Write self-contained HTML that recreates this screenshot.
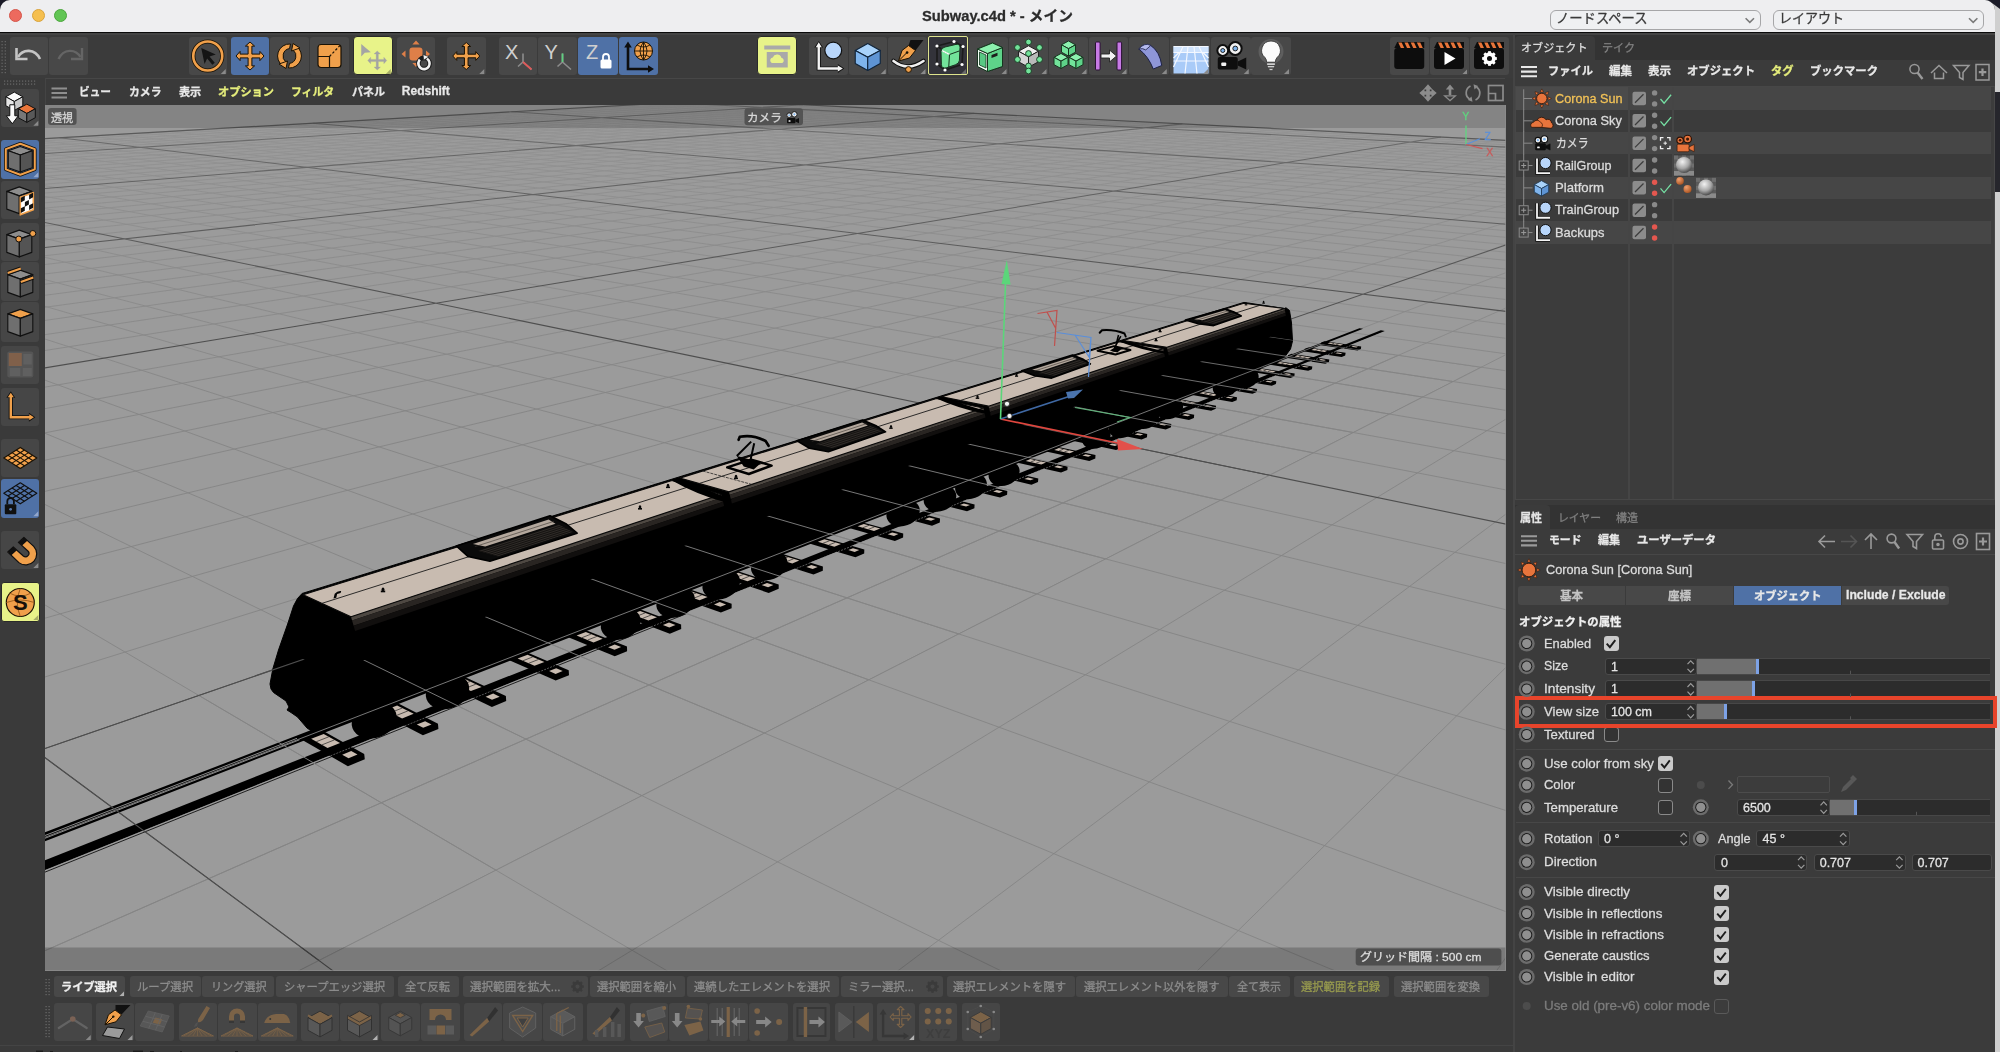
<!DOCTYPE html>
<html lang="ja"><head><meta charset="utf-8"><title>Subway.c4d * - メイン</title><style>html,body{margin:0;padding:0;width:2000px;height:1052px;overflow:hidden;background:#3a3a3a}body{position:relative;font-family:"Liberation Sans","Noto Sans CJK JP",sans-serif}div{position:absolute;box-sizing:border-box}.t{position:absolute;white-space:pre;transform-origin:0 50%;display:block;-webkit-text-stroke:0.28px currentColor}svg{position:absolute;left:0;top:0}</style></head><body>
<div style="left:0px;top:0px;width:2000px;height:1052px;background:#1b1b28;"></div>
<div style="left:1990px;top:0px;width:10px;height:1052px;background:#cfcfcf;"></div>
<div style="left:1995px;top:92px;width:5px;height:100px;background:#26262c;"></div>
<div style="left:0px;top:0px;width:1995px;height:1052px;background:#3a3a3a;border-radius:10px 10px 0 0;"></div>
<div style="left:0px;top:0px;width:1995px;height:31.5px;background:#eeeef0;border-radius:10px 10px 0 0;"></div>
<div style="left:0px;top:31.5px;width:1995px;height:1.5px;background:#0a0a0a;"></div>
<div style="left:9px;top:9px;width:13px;height:13px;background:#ed6a5e;border-radius:50%;border:0.5px solid #d5554a;"></div>
<div style="left:31.5px;top:9px;width:13px;height:13px;background:#f5bf4f;border-radius:50%;border:0.5px solid #d9a33c;"></div>
<div style="left:53.7px;top:9px;width:13px;height:13px;background:#61c554;border-radius:50%;border:0.5px solid #4aa63c;"></div>
<div style="left:1549.5px;top:9.8px;width:211.3px;height:20px;background:#eff0f2;border-radius:6px;border:1px solid #a6a6a8;"></div>
<div style="left:1772.5px;top:9.8px;width:211.7px;height:20px;background:#eff0f2;border-radius:6px;border:1px solid #a6a6a8;"></div>
<div style="left:0px;top:33px;width:1995px;height:45px;background:#3b3b3b;"></div>
<div style="left:0px;top:33px;width:1995px;height:2px;background:#444;"></div>
<div style="left:10px;top:37px;width:38px;height:38px;background:#484848;border-radius:3px;"></div>
<div style="left:49px;top:37px;width:39px;height:38px;background:#484848;border-radius:3px;"></div>
<div style="left:188.5px;top:37px;width:38.5px;height:38px;background:#484848;border-radius:3px;"></div>
<div style="left:231px;top:37px;width:38px;height:38px;background:#4f71a6;border-radius:3px;"></div>
<div style="left:270px;top:37px;width:39px;height:38px;background:#484848;border-radius:3px;"></div>
<div style="left:310px;top:37px;width:39px;height:38px;background:#484848;border-radius:3px;"></div>
<div style="left:353px;top:35.8px;width:39.5px;height:39.4px;background:#e8f389;border-radius:4px;border:1px solid #2a2a2a;"></div>
<div style="left:397px;top:37px;width:38px;height:38px;background:#484848;border-radius:3px;"></div>
<div style="left:447px;top:37px;width:38.5px;height:38px;background:#484848;border-radius:3px;"></div>
<div style="left:499px;top:37px;width:38px;height:38px;background:#484848;border-radius:3px;"></div>
<div style="left:538px;top:37px;width:39px;height:38px;background:#484848;border-radius:3px;"></div>
<div style="left:578px;top:37px;width:40px;height:38px;background:#4f71a6;border-radius:3px;"></div>
<div style="left:618.5px;top:37px;width:39px;height:38px;background:#4f71a6;border-radius:3px;"></div>
<div style="left:757px;top:35.8px;width:39.5px;height:39.4px;background:#e8f389;border-radius:4px;border:1px solid #2a2a2a;"></div>
<div style="left:809px;top:37px;width:38.5px;height:38px;background:#484848;border-radius:3px;"></div>
<div style="left:848.5px;top:37px;width:38.5px;height:38px;background:#484848;border-radius:3px;"></div>
<div style="left:888px;top:37px;width:39px;height:38px;background:#484848;border-radius:3px;"></div>
<div style="left:928px;top:36.2px;width:40px;height:39.3px;background:#33333a;border-radius:2px;border:1.2px solid #dde38d;"></div>
<div style="left:969px;top:37px;width:39px;height:38px;background:#484848;border-radius:3px;"></div>
<div style="left:1009px;top:37px;width:39px;height:38px;background:#484848;border-radius:3px;"></div>
<div style="left:1049px;top:37px;width:39px;height:38px;background:#484848;border-radius:3px;"></div>
<div style="left:1089px;top:37px;width:39px;height:38px;background:#484848;border-radius:3px;"></div>
<div style="left:1129px;top:37px;width:39.5px;height:38px;background:#484848;border-radius:3px;"></div>
<div style="left:1170px;top:37px;width:40px;height:38px;background:#484848;border-radius:3px;"></div>
<div style="left:1211px;top:37px;width:39.5px;height:38px;background:#484848;border-radius:3px;"></div>
<div style="left:1251px;top:37px;width:40px;height:38px;background:#484848;border-radius:3px;"></div>
<div style="left:1390px;top:37px;width:38.5px;height:38px;background:#484848;border-radius:3px;"></div>
<div style="left:1429.5px;top:37px;width:39px;height:38px;background:#484848;border-radius:3px;"></div>
<div style="left:1469.5px;top:37px;width:39px;height:38px;background:#484848;border-radius:3px;"></div>
<div style="left:0px;top:78px;width:45px;height:974px;background:#3a3a3a;"></div>
<div style="left:1.3px;top:89px;width:38px;height:37.5px;background:#464646;border-radius:3px;"></div>
<div style="left:1.3px;top:140px;width:38px;height:38.5px;background:#4f71a6;border-radius:3px;"></div>
<div style="left:1.3px;top:180.5px;width:38px;height:38.5px;background:#464646;border-radius:3px;"></div>
<div style="left:1.3px;top:223px;width:38px;height:38px;background:#464646;border-radius:3px;"></div>
<div style="left:1.3px;top:262px;width:38px;height:39px;background:#464646;border-radius:3px;"></div>
<div style="left:1.3px;top:302px;width:38px;height:39.5px;background:#464646;border-radius:3px;"></div>
<div style="left:1.3px;top:345.5px;width:38px;height:38px;background:#464646;border-radius:3px;"></div>
<div style="left:1.3px;top:387.5px;width:38px;height:38.5px;background:#464646;border-radius:3px;"></div>
<div style="left:1.3px;top:439.4px;width:38px;height:38px;background:#464646;border-radius:3px;"></div>
<div style="left:1.3px;top:478.6px;width:38px;height:39.4px;background:#4f71a6;border-radius:3px;"></div>
<div style="left:1.3px;top:531px;width:38px;height:38px;background:#464646;border-radius:3px;"></div>
<div style="left:1px;top:582.4px;width:38.5px;height:39.2px;background:#e8f389;border-radius:3px;border:1px solid #2a2a2a;"></div>
<div style="left:45px;top:78px;width:1461px;height:27px;background:#3a3a3a;border-radius:0;border-top:1px solid #474747;border-left:1px solid #444;"></div>
<div style="left:1505px;top:78px;width:9px;height:974px;background:#3a3a3a;"></div>
<div style="left:45px;top:970px;width:1460px;height:82px;background:#3a3a3a;"></div>
<div style="left:53.8px;top:976px;width:71.2px;height:21.2px;background:#484848;border-radius:3px;"></div>
<div style="left:129.5px;top:976px;width:71px;height:21.2px;background:#484848;border-radius:3px;"></div>
<div style="left:201.5px;top:976px;width:72.5px;height:21.2px;background:#484848;border-radius:3px;"></div>
<div style="left:275.5px;top:976px;width:118.5px;height:21.2px;background:#484848;border-radius:3px;"></div>
<div style="left:398px;top:976px;width:60.5px;height:21.2px;background:#484848;border-radius:3px;"></div>
<div style="left:463px;top:976px;width:124.5px;height:21.2px;background:#484848;border-radius:3px;"></div>
<div style="left:590px;top:976px;width:95px;height:21.2px;background:#484848;border-radius:3px;"></div>
<div style="left:687px;top:976px;width:152px;height:21.2px;background:#484848;border-radius:3px;"></div>
<div style="left:841px;top:976px;width:101.5px;height:21.2px;background:#484848;border-radius:3px;"></div>
<div style="left:946.5px;top:976px;width:128px;height:21.2px;background:#484848;border-radius:3px;"></div>
<div style="left:1075.8px;top:976px;width:151.9px;height:21.2px;background:#484848;border-radius:3px;"></div>
<div style="left:1229px;top:976px;width:61px;height:21.2px;background:#484848;border-radius:3px;"></div>
<div style="left:1294.3px;top:976px;width:94.7px;height:21.2px;background:#484848;border-radius:3px;"></div>
<div style="left:1393.8px;top:976px;width:95.2px;height:21.2px;background:#484848;border-radius:3px;"></div>
<div style="left:54px;top:1003px;width:37.5px;height:37.6px;background:#464646;border-radius:3px;"></div>
<div style="left:95.5px;top:1003px;width:38px;height:37.6px;background:#464646;border-radius:3px;"></div>
<div style="left:134.5px;top:1003px;width:39.5px;height:37.6px;background:#464646;border-radius:3px;"></div>
<div style="left:178.5px;top:1003px;width:38px;height:37.6px;background:#464646;border-radius:3px;"></div>
<div style="left:217.5px;top:1003px;width:39px;height:37.6px;background:#464646;border-radius:3px;"></div>
<div style="left:257.5px;top:1003px;width:39.5px;height:37.6px;background:#464646;border-radius:3px;"></div>
<div style="left:301px;top:1003px;width:38px;height:37.6px;background:#464646;border-radius:3px;"></div>
<div style="left:340px;top:1003px;width:39px;height:37.6px;background:#464646;border-radius:3px;"></div>
<div style="left:380.5px;top:1003px;width:39.5px;height:37.6px;background:#464646;border-radius:3px;"></div>
<div style="left:421px;top:1003px;width:39px;height:37.6px;background:#464646;border-radius:3px;"></div>
<div style="left:464.2px;top:1003px;width:37.8px;height:37.6px;background:#464646;border-radius:3px;"></div>
<div style="left:503.3px;top:1003px;width:38.7px;height:37.6px;background:#464646;border-radius:3px;"></div>
<div style="left:543px;top:1003px;width:39.5px;height:37.6px;background:#464646;border-radius:3px;"></div>
<div style="left:586.8px;top:1003px;width:38.2px;height:37.6px;background:#464646;border-radius:3px;"></div>
<div style="left:629.5px;top:1003px;width:38.5px;height:37.6px;background:#464646;border-radius:3px;"></div>
<div style="left:668.8px;top:1003px;width:39.2px;height:37.6px;background:#464646;border-radius:3px;"></div>
<div style="left:708.7px;top:1003px;width:39.1px;height:37.6px;background:#464646;border-radius:3px;"></div>
<div style="left:748.6px;top:1003px;width:39.1px;height:37.6px;background:#464646;border-radius:3px;"></div>
<div style="left:792.5px;top:1003px;width:37.9px;height:37.6px;background:#464646;border-radius:3px;"></div>
<div style="left:834.7px;top:1003px;width:38.3px;height:37.6px;background:#464646;border-radius:3px;"></div>
<div style="left:876.9px;top:1003px;width:38.4px;height:37.6px;background:#464646;border-radius:3px;"></div>
<div style="left:919.3px;top:1003px;width:37.9px;height:37.6px;background:#464646;border-radius:3px;"></div>
<div style="left:961.5px;top:1003px;width:38.5px;height:37.6px;background:#464646;border-radius:3px;"></div>
<div style="left:0px;top:1044.5px;width:1513px;height:1px;background:#444;"></div>
<div style="left:1513.3px;top:33px;width:1.4px;height:1019px;background:#444;"></div>
<div style="left:1514.5px;top:35px;width:480.5px;height:50px;background:#333;"></div>
<div style="left:1514.5px;top:36px;width:80px;height:24px;background:#3b3b3b;border-radius:4px 4px 0 0;"></div>
<div style="left:1514.5px;top:59.5px;width:480.5px;height:26px;background:#3b3b3b;"></div>
<div style="left:1514.5px;top:85.5px;width:480.5px;height:414px;background:#3c3c3c;border-radius:0;border:1px solid #474747;"></div>
<div style="left:1516px;top:87.3px;width:475px;height:22.35px;background:#464646;"></div>
<div style="left:1516px;top:87.3px;width:112px;height:22.35px;background:#4b4b4b;"></div>
<div style="left:1516px;top:109.65px;width:475px;height:22.35px;background:#3b3b3b;"></div>
<div style="left:1516px;top:132px;width:475px;height:22.35px;background:#464646;"></div>
<div style="left:1516px;top:154.35px;width:475px;height:22.35px;background:#3b3b3b;"></div>
<div style="left:1516px;top:176.7px;width:475px;height:22.35px;background:#464646;"></div>
<div style="left:1516px;top:199.05px;width:475px;height:22.35px;background:#3b3b3b;"></div>
<div style="left:1516px;top:221.4px;width:475px;height:22.35px;background:#464646;"></div>
<div style="left:1628px;top:86.5px;width:1.8px;height:412px;background:#454545;"></div>
<div style="left:1672.4px;top:86.5px;width:1.8px;height:412px;background:#454545;"></div>
<div style="left:1514.5px;top:504.5px;width:480.5px;height:24px;background:#333;"></div>
<div style="left:1514.5px;top:505px;width:35.5px;height:24px;background:#3b3b3b;border-radius:4px 4px 0 0;"></div>
<div style="left:1514.5px;top:528.5px;width:480.5px;height:524px;background:#3b3b3b;"></div>
<div style="left:1514.5px;top:553.5px;width:480.5px;height:1px;background:#474747;"></div>
<div style="left:1518px;top:586px;width:107px;height:19px;background:#484848;border-radius:3px 0 0 3px;"></div>
<div style="left:1626px;top:586px;width:107px;height:19px;background:#484848;"></div>
<div style="left:1734px;top:586px;width:107px;height:19px;background:#4f71a6;"></div>
<div style="left:1842px;top:586px;width:107px;height:19px;background:#484848;border-radius:0 3px 3px 0;"></div>
<div style="left:1603.5px;top:636px;width:15px;height:15px;background:#cacaca;border-radius:3px;"></div>
<div style="left:1605px;top:657.5px;width:92px;height:17.4px;background:#2c2c2c;border-radius:3px;border:1px solid #4a4a4a;"></div>
<div style="left:1697px;top:657.5px;width:293px;height:17.4px;background:#2c2c2c;border-top:1px solid #474747;border-bottom:1px solid #474747;"></div>
<div style="left:1697px;top:658.5px;width:59.5px;height:15.4px;background:#707070;"></div>
<div style="left:1756px;top:658.5px;width:3px;height:15.4px;background:#7da2e6;"></div>
<div style="left:1605px;top:680.3px;width:92px;height:17.4px;background:#2c2c2c;border-radius:3px;border:1px solid #4a4a4a;"></div>
<div style="left:1697px;top:680.3px;width:293px;height:17.4px;background:#2c2c2c;border-top:1px solid #474747;border-bottom:1px solid #474747;"></div>
<div style="left:1697px;top:681.3px;width:55px;height:15.4px;background:#707070;"></div>
<div style="left:1751.5px;top:681.3px;width:3px;height:15.4px;background:#7da2e6;"></div>
<div style="left:1605px;top:703.1px;width:92px;height:17.4px;background:#2c2c2c;border-radius:3px;border:1px solid #4a4a4a;"></div>
<div style="left:1697px;top:703.1px;width:293px;height:17.4px;background:#2c2c2c;border-top:1px solid #474747;border-bottom:1px solid #474747;"></div>
<div style="left:1697px;top:704.1px;width:27px;height:15.4px;background:#707070;"></div>
<div style="left:1723.5px;top:704.1px;width:3px;height:15.4px;background:#7da2e6;"></div>
<div style="left:1603.5px;top:727px;width:15px;height:15px;background:#333;border-radius:3px;border:1.2px solid #8a8a8a;"></div>
<div style="left:1516px;top:749.3px;width:479px;height:1px;background:#474747;"></div>
<div style="left:1658px;top:756.2px;width:15px;height:15px;background:#cacaca;border-radius:3px;"></div>
<div style="left:1658px;top:777.5px;width:15px;height:15px;background:#333;border-radius:3px;border:1.2px solid #8a8a8a;"></div>
<div style="left:1737px;top:776px;width:93px;height:17px;background:#3c3c3c;border-radius:2px;border:1px solid #4c4c4c;"></div>
<div style="left:1658px;top:799.8px;width:15px;height:15px;background:#333;border-radius:3px;border:1.2px solid #8a8a8a;"></div>
<div style="left:1737px;top:798.6px;width:93px;height:17.4px;background:#2c2c2c;border-radius:3px;border:1px solid #4a4a4a;"></div>
<div style="left:1830px;top:798.6px;width:160px;height:17.4px;background:#2c2c2c;border-top:1px solid #474747;border-bottom:1px solid #474747;"></div>
<div style="left:1830px;top:799.6px;width:24px;height:15.4px;background:#707070;"></div>
<div style="left:1853.5px;top:799.6px;width:3px;height:15.4px;background:#7da2e6;"></div>
<div style="left:1516px;top:822.3px;width:479px;height:1px;background:#474747;"></div>
<div style="left:1598px;top:830px;width:92px;height:17.4px;background:#2c2c2c;border-radius:3px;border:1px solid #4a4a4a;"></div>
<div style="left:1756px;top:830px;width:93.5px;height:17.4px;background:#2c2c2c;border-radius:3px;border:1px solid #4a4a4a;"></div>
<div style="left:1714.4px;top:853.5px;width:93.1px;height:17.4px;background:#2c2c2c;border-radius:3px;border:1px solid #4a4a4a;"></div>
<div style="left:1813.7px;top:853.5px;width:92px;height:17.4px;background:#2c2c2c;border-radius:3px;border:1px solid #4a4a4a;"></div>
<div style="left:1911.6px;top:853.5px;width:80.4px;height:17.4px;background:#2c2c2c;border-radius:3px;border:1px solid #4a4a4a;"></div>
<div style="left:1516px;top:877px;width:479px;height:1px;background:#474747;"></div>
<div style="left:1714px;top:884.6px;width:15px;height:15px;background:#cacaca;border-radius:3px;"></div>
<div style="left:1714px;top:906px;width:15px;height:15px;background:#cacaca;border-radius:3px;"></div>
<div style="left:1714px;top:927.3px;width:15px;height:15px;background:#cacaca;border-radius:3px;"></div>
<div style="left:1714px;top:948.4px;width:15px;height:15px;background:#cacaca;border-radius:3px;"></div>
<div style="left:1714px;top:969.5px;width:15px;height:15px;background:#cacaca;border-radius:3px;"></div>
<div style="left:1714px;top:998.5px;width:15px;height:15px;background:#3c3c3c;border-radius:3px;border:1.2px solid #5a5a5a;"></div>
<div style="left:1515px;top:695.5px;width:481.5px;height:32.2px;background:transparent;border:4.500px solid #e8442b;"></div>
<svg id="vp" width="1461" height="866" viewBox="45 105 1461 866" style="position:absolute;left:45px;top:105px;overflow:hidden"><rect x="45" y="105" width="1461" height="866" fill="#9b9b9b"/><defs><linearGradient id="gg" gradientUnits="userSpaceOnUse" x1="0" y1="105" x2="0" y2="420"><stop offset="0" stop-color="#fff" stop-opacity="0.32"/><stop offset="0.25" stop-color="#fff" stop-opacity="0.52"/><stop offset="1" stop-color="#fff" stop-opacity="1"/></linearGradient><linearGradient id="gG" gradientUnits="userSpaceOnUse" x1="0" y1="105" x2="0" y2="330"><stop offset="0" stop-color="#fff" stop-opacity="0.55"/><stop offset="1" stop-color="#fff" stop-opacity="1"/></linearGradient><mask id="gM" maskUnits="userSpaceOnUse" x="0" y="0" width="2000" height="1052"><rect x="0" y="0" width="2000" height="1052" fill="url(#gG)"/></mask><mask id="gm" maskUnits="userSpaceOnUse" x="0" y="0" width="2000" height="1052"><rect x="0" y="0" width="2000" height="1052" fill="url(#gg)"/></mask></defs>
<g mask="url(#gm)"><path d="M152020.3 7814.0L112689.2 5767.5 M141511.2 7508.0L52014.6 2696.6 M142439.9 7685.4L40853.5 2131.7 M143413.8 7871.4L33577.1 1763.5 M144436.5 8066.6L28458.0 1504.4 M133163.8 7560.8L24660.5 1312.2 M133899.4 7740.8L21731.5 1163.9 M134671.3 7929.6L19403.5 1046.1 M135482.0 8128.0L17508.8 950.2 M124689.5 7614.5L15936.7 870.7 M125789.3 7988.9L13478.7 746.3 M115769.8 7492.1L12499.8 696.7 M116085.6 7668.9L11645.2 653.5 M116416.9 7854.4L10892.6 615.4 M116764.7 8049.0L10224.9 581.6 M107235.2 7544.8L9628.4 551.4 M107349.0 7724.2L9092.3 524.3 M107468.4 7912.5L8607.9 499.7 M107593.8 8110.2L8168.0 477.5 M98476.6 7780.4L7399.5 438.6 M98377.4 7971.5L7061.8 421.5 M90069.6 7476.2L6750.3 405.7 M89774.6 7652.5L6462.1 391.1 M89465.2 7837.4L6194.7 377.6 M89140.4 8031.5L5946.0 365.0 M81348.5 7528.7L5713.9 353.3 M80842.4 7707.6L5496.9 342.3 M80311.5 7895.3L5293.6 332.0 M72495.2 7582.0L4923.2 313.2 M71771.6 7763.6L4753.9 304.7 M71012.2 7954.2L4594.1 296.6 M64410.5 7460.3L4443.1 288.9 M63506.6 7636.1L4300.0 281.7 M62558.7 7820.4L4164.3 274.8 M61563.6 8014.0L4035.5 268.3 M55503.5 7512.7L3912.9 262.1 M54379.5 7691.1L3796.3 256.2 M51962.3 8074.7L3579.0 245.2 M46461.5 7565.8L3477.6 240.1 M45110.9 7746.9L3380.6 235.2 M43693.5 7936.8L3287.9 230.5 M38792.3 7444.5L3198.9 226.0 M37281.5 7619.7L3113.7 221.7 M35697.3 7803.5L3031.9 217.5 M34034.2 7996.5L2953.2 213.5 M29700.0 7496.7L2877.7 209.7 M26135.3 7861.1L2735.0 202.5 M24218.7 8057.0L2667.5 199.1 M20470.0 7549.6L2602.5 195.8 M18494.5 7730.1L2539.8 192.6 M16421.4 7919.6L2479.2 189.6 M13215.0 7428.7L2420.7 186.6 M11099.3 7603.4L2364.2 183.7 M8880.8 7786.6L2309.5 181.0 M6551.9 7979.0L2256.6 178.3 M1584.5 7658.0L2155.8 173.2 M-884.3 7844.0L2107.7 170.8 M-3476.9 8039.4L2061.1 168.4 M-5479.3 7533.5L2015.9 166.1 M-8077.8 7713.5L1972.0 163.9 M-10804.4 7902.3L1929.4 161.7 M-12321.4 7412.9L1888.0 159.6 M-15040.2 7587.1L1847.8 157.6 M-17890.9 7769.8L1808.7 155.6 M-21782.5 7464.7L1733.7 151.8 M-24748.0 7641.5L1697.7 150.0 M-27858.4 7827.0L1662.6 148.2 M-31124.7 8021.7L1628.5 146.5 M-31386.7 7517.4L1595.2 144.8 M-34606.0 7696.8L1562.8 143.2 M-37984.0 7885.1L1531.2 141.6 M-37817.2 7397.1L1500.4 140.0 M-41137.1 7570.8L1470.3 138.5 M-48271.4 7944.1L1412.4 135.6 M-47461.8 7448.8L1384.4 134.1 M-51037.1 7625.1L1357.1 132.8 M-54787.0 7810.0L1330.4 131.4 M-58724.7 8004.1L1304.3 130.1 M-57252.1 7501.3L1278.9 128.8 M-61090.3 7680.2L1253.9 127.5 M-65117.4 7867.9L1229.6 126.3 M-63272.4 7381.4L1205.7 125.1 M-71300.1 7736.1L1159.6 122.8 M-75612.8 7926.7L1137.3 121.6 M-73099.9 7432.9L1115.4 120.5 M-77283.1 7608.7L1094.0 119.4 M-81670.4 7793.0L1073.0 118.4 M-86277.2 7986.5L1052.4 117.3 M-83075.8 7485.2L1032.3 116.3 M-87530.7 7663.6L1012.5 115.3 M-92204.8 7850.7L993.2 114.3 M-93203.3 7538.3L955.6 112.4 M-97937.9 7719.4L937.3 111.5 M-102907.4 7909.4L919.4 110.6 M-98697.0 7417.0L901.8 109.7 M-103486.0 7592.3L884.6 108.8 M-108508.5 7776.0L867.6 108.0 M-113782.2 7969.0L851.0 107.1 M-108857.7 7469.2L834.7 106.3 M-113927.4 7647.0L818.6 105.5 M-124833.3 8029.6L787.4 103.9 M-119172.8 7522.1L772.2 103.2 M-124531.4 7702.6L757.3 102.4 M-130155.4 7892.1L742.6 101.7 M-124253.0 7401.2L728.2 100.9 M-129645.9 7575.9L714.0 100.2 M-133549.6 7829.7L-114685.7 6718.0 M-124370.1 7444.0L-64377.4 3833.0 M-126502.1 7909.3L-33589.1 2067.4 M-117589.4 7516.0L-26871.3 1682.1 M-118426.1 7746.0L-22278.6 1418.7 M-119315.5 7990.5L-18940.2 1227.3 M-110681.5 7589.4L-16404.0 1081.9 M-111313.4 7823.9L-14411.9 967.6 M-103248.4 7439.2L-12805.8 875.5 M-103642.9 7664.2L-11483.3 799.7 M-104062.0 7903.3L-10375.6 736.2 M-96469.9 7740.5L-8624.0 635.7 M-96667.7 7984.3L-7919.7 595.3 M-89188.8 7584.3L-7301.7 559.9 M-89158.5 7818.1L-6755.1 528.5 M-82200.0 7434.4L-6268.1 500.6 M-81959.8 7658.9L-5831.5 475.6 M-81704.7 7897.3L-5437.9 453.0 M-75052.8 7506.1L-5081.2 432.5 M-74592.9 7734.9L-4756.5 413.9 M-67772.1 7579.1L-4187.1 381.3 M-67084.2 7812.4L-3936.2 366.9 M-61224.5 7429.6L-3704.3 353.6 M-60354.0 7653.6L-3489.4 341.3 M-59429.6 7891.4L-3289.6 329.8 M-53896.0 7501.1L-3103.5 319.1 M-52794.8 7729.4L-2929.7 309.2 M-51624.6 7972.0L-2767.0 299.8 M-46430.9 7574.0L-2614.3 291.1 M-43664.9 8054.1L-2335.6 275.1 M-38825.2 7648.3L-2208.1 267.8 M-37236.3 7885.5L-2087.7 260.9 M-32813.1 7496.2L-1973.7 254.3 M-31075.0 7723.9L-1865.6 248.1 M-29228.3 7965.9L-1763.0 242.3 M-25164.9 7568.9L-1665.5 236.7 M-23176.2 7801.0L-1572.8 231.3 M-21061.9 8047.8L-1484.4 226.3 M-15124.3 7879.6L-1319.6 216.8 M-11803.6 7491.3L-1242.7 212.4 M-9433.2 7718.4L-1169.0 208.2 M-6915.0 7959.8L-1098.5 204.1 M-3973.7 7563.8L-1030.9 200.3 M-1341.5 7795.4L-966.1 196.6 M1456.5 8041.5L-903.8 193.0 M4003.2 7637.7L-844.0 189.6 M6906.7 7873.8L-786.4 186.3 M12131.0 7713.0L-677.6 180.0 M15316.0 7953.7L-626.2 177.1 M17143.2 7558.7L-576.6 174.2 M20414.3 7789.7L-528.7 171.5 M23891.0 8035.2L-482.5 168.8 M25303.6 7632.4L-437.8 166.3 M28857.3 7867.9L-394.6 163.8 M29996.5 7481.5L-352.8 161.4 M33618.2 7707.5L-312.4 159.1 M38186.0 7553.7L-235.3 154.6 M42091.4 7784.1L-198.5 152.5 M46242.0 8028.9L-162.8 150.5 M46528.6 7627.2L-128.2 148.5 M50727.9 7862.1L-94.6 146.6 M50787.9 7476.6L-62.0 144.7 M55028.6 7702.1L-30.3 142.9 M59532.4 7941.6L0.6 141.1 M59155.3 7548.6L30.5 139.4 M68509.8 8022.7L88.0 136.1 M67678.7 7622.0L115.6 134.5 M72518.9 7856.3L142.5 133.0 M77665.3 8105.4L168.7 131.5 M76362.7 7696.7L194.2 130.0 M81518.8 7935.6L219.1 128.6 M80051.3 7543.6L243.4 127.2 M85211.8 7772.9L267.0 125.8 M90695.0 8016.5L290.1 124.5 M94230.8 7850.5L334.7 122.0 M100053.0 8099.0L356.2 120.7 M97621.0 7691.4L377.1 119.5 M103424.5 7929.6L397.6 118.3 M100874.5 7538.6L417.7 117.2 M106655.9 7767.3L437.3 116.1 M112798.1 8010.3L456.4 115.0 M109755.8 7611.6L475.2 113.9 M115863.9 7844.7L493.5 112.9 M118803.7 7686.0L529.0 110.8 M125250.0 7923.7L546.2 109.8 M121625.2 7533.6L563.0 108.9 M128023.1 7761.8L579.5 107.9 M134819.5 8004.1L595.7 107.0 M130683.4 7606.5L611.5 106.1 M137418.7 7839.0L627.0 105.2 M144577.7 8086.2L642.2 104.3 M139911.4 7680.7L657.1 103.5 M142303.8 7528.7L686.1 101.8 M149313.8 7756.2L700.2 101.0 M156759.6 7998.0L714.0 100.2" stroke="#858585" stroke-width="0.9" fill="none"/></g>
<g mask="url(#gM)"><path d="M153248.1 8006.3L71304.4 3672.9 M125226.1 7797.1L14611.3 803.6 M98571.2 7598.2L7766.9 457.2 M79753.9 8092.4L5102.7 322.3 M53200.5 7878.2L3685.1 250.6 M27960.2 7674.5L2805.0 206.0 M3938.0 7480.7L2205.4 175.7 M-20883.3 7961.5L1770.7 153.7 M-44617.8 7752.9L1441.0 137.0 M-67191.4 7554.6L1182.4 123.9 M-88687.1 7365.6L974.2 113.4 M-119246.4 7833.6L802.9 104.7 M-125403.9 7669.6L-44350.3 2684.5 M-96283.8 7511.1L-9434.1 682.2 M-74104.2 7978.1L-4459.6 396.9 M-45090.3 7806.7L-2470.8 282.8 M-17373.0 7643.0L-1400.1 221.4 M9132.8 7486.4L-731.0 183.1 M37465.0 7947.6L-273.2 156.8 M63690.5 7778.5L59.7 137.7 M88754.3 7616.8L312.7 123.2 M122357.0 8092.6L511.4 111.8 M146995.8 7917.7L671.7 102.6" stroke="#4e4e4e" stroke-width="1.1" fill="none"/></g>
<path d="M-129645.9 7575.9L714.0 100.2 M156759.6 7998.0L714.0 100.2" stroke="#5a5a5a" stroke-width="1.2" fill="none"/><defs><clipPath id="st"><polygon points="606.5,813.8 1481.3,367.2 1270.5,336.8 329.5,672.4"/><polygon points="-177.3,1213.9 606.5,813.8 302.2,658.4 -385.0,894.8"/></clipPath><pattern id="hat" width="2" height="2" patternUnits="userSpaceOnUse" patternTransform="rotate(-18)"><rect width="2" height="2" fill="#141210"/><rect width="2" height="0.5" fill="#4a443f"/></pattern><linearGradient id="edgeg" x1="0" y1="0" x2="0.12" y2="1"><stop offset="0" stop-color="#a89c92"/><stop offset="0.45" stop-color="#4a4540"/><stop offset="1" stop-color="#000"/></linearGradient></defs>
<polygon points="301.7,734.7 318.4,728.3 364.2,753.9 364.8,759.3 347.9,766.2 302.3,740.0" fill="#000"/>
<polygon points="376.1,706.1 391.5,700.1 438.0,723.7 438.4,729.0 422.9,735.3 376.6,711.2" fill="#000"/>
<polygon points="444.8,679.6 459.0,674.2 505.9,696.0 506.2,701.0 491.9,706.9 445.2,684.6" fill="#000"/>
<polygon points="508.4,655.2 521.6,650.1 568.7,670.3 569.0,675.2 555.7,680.6 508.7,660.0" fill="#000"/>
<polygon points="567.5,632.5 579.8,627.7 627.0,646.5 627.1,651.2 614.8,656.3 567.7,637.1" fill="#000"/>
<polygon points="622.5,611.3 634.0,606.9 681.1,624.4 681.2,629.0 669.8,633.7 622.6,615.8" fill="#000"/>
<polygon points="673.8,591.5 684.6,587.4 731.6,603.8 731.6,608.2 720.9,612.6 674.0,595.9" fill="#000"/>
<polygon points="721.9,573.0 732.0,569.2 778.7,584.5 778.7,588.8 768.7,592.9 722.0,577.3" fill="#000"/>
<polygon points="767.0,555.7 776.4,552.1 822.9,566.5 822.8,570.7 813.5,574.5 767.0,559.8" fill="#000"/>
<polygon points="809.3,543.4 809.3,539.4 818.2,536.0 864.3,549.5 864.2,553.6 855.4,557.2" fill="#000"/>
<polygon points="849.1,528.0 849.2,524.1 857.5,520.9 903.2,533.6 903.1,537.6 894.9,541.0" fill="#000"/>
<polygon points="886.6,513.5 886.7,509.6 894.6,506.6 940.0,518.6 939.8,522.5 932.0,525.7" fill="#000"/>
<polygon points="922.1,499.7 922.2,496.0 929.7,493.1 974.6,504.4 974.4,508.2 967.0,511.3" fill="#000"/>
<polygon points="955.7,486.7 955.8,483.0 962.9,480.3 1007.3,491.1 1007.1,494.8 1000.1,497.6" fill="#000"/>
<polygon points="987.5,474.4 987.6,470.8 994.4,468.2 1038.3,478.4 1038.0,482.0 1031.5,484.7" fill="#000"/>
<polygon points="1017.6,462.7 1017.8,459.2 1024.2,456.7 1067.6,466.4 1067.4,469.9 1061.1,472.5" fill="#000"/>
<polygon points="1046.3,451.6 1046.5,448.1 1052.6,445.8 1095.5,455.0 1095.3,458.5 1089.3,460.9" fill="#000"/>
<polygon points="1073.6,441.0 1073.8,437.6 1079.6,435.4 1122.0,444.2 1121.8,447.6 1116.1,449.9" fill="#000"/>
<polygon points="1099.6,430.9 1099.8,427.7 1105.3,425.5 1147.2,433.9 1147.0,437.2 1141.6,439.4" fill="#000"/>
<polygon points="1124.3,421.3 1124.6,418.1 1129.8,416.1 1171.3,424.1 1171.0,427.3 1165.8,429.4" fill="#000"/>
<polygon points="1148.0,412.1 1148.3,409.0 1153.3,407.1 1194.2,414.7 1193.9,417.9 1189.0,419.9" fill="#000"/>
<polygon points="1170.6,403.4 1170.9,400.3 1175.7,398.5 1216.1,405.7 1215.8,408.8 1211.1,410.8" fill="#000"/>
<polygon points="1192.2,395.0 1192.5,392.0 1197.1,390.2 1237.0,397.2 1236.7,400.2 1232.2,402.1" fill="#000"/>
<polygon points="1212.9,387.0 1213.2,384.0 1217.6,382.3 1257.1,389.0 1256.7,392.0 1252.5,393.7" fill="#000"/>
<polygon points="1232.8,379.3 1233.1,376.4 1237.3,374.8 1276.3,381.2 1275.9,384.1 1271.8,385.8" fill="#000"/>
<polygon points="1251.8,371.9 1252.1,369.1 1256.1,367.5 1294.7,373.6 1294.3,376.5 1290.4,378.1" fill="#000"/>
<polygon points="1270.1,364.8 1270.4,362.0 1274.3,360.5 1312.3,366.4 1312.0,369.2 1308.2,370.8" fill="#000"/>
<polygon points="1287.6,358.0 1288.0,355.3 1291.7,353.8 1329.3,359.5 1328.9,362.2 1325.3,363.8" fill="#000"/>
<polygon points="1304.5,351.5 1304.8,348.8 1308.4,347.4 1345.6,352.8 1345.2,355.6 1341.7,357.0" fill="#000"/>
<polygon points="1320.8,345.2 1321.1,342.5 1324.5,341.2 1361.2,346.4 1360.9,349.1 1357.5,350.5" fill="#000"/>
<polygon points="-630.0,1103.5 1257.0,370.5 1250.0,369.4 -633.2,1092.9" fill="#000"/>
<polygon points="1255.9,370.4 1363.1,328.8 1359.4,328.3 1251.9,369.7" fill="#000"/>
<polygon points="-619.9,1137.1 1278.9,374.1 1271.7,372.9 -623.2,1125.9" fill="#000"/>
<polygon points="1277.7,373.9 1384.9,330.9 1380.8,330.3 1273.3,373.2" fill="#000"/>
<line x1="-632.0" y1="1096.6" x2="297.0" y2="738.3" stroke="#9a9a9a" stroke-width="0.9"/>
<line x1="-631.1" y1="1099.9" x2="299.5" y2="739.8" stroke="#9a9a9a" stroke-width="0.9"/>
<line x1="-619.6" y1="1138.0" x2="1386.5" y2="331.1" stroke="#9a9a9a" stroke-width="0.6" stroke-dasharray="2 1.2"/>
<line x1="-619.1" y1="1139.7" x2="686.6" y2="613.6" stroke="#000" stroke-width="0.8"/>
<polygon points="327.5,748.1 340.1,743.1 323.7,733.9 311.2,738.8" fill="#c8bbb0"/>
<line x1="316.3" y1="741.7" x2="328.8" y2="736.8" stroke="#222" stroke-width="0.7"/>
<line x1="321.9" y1="744.9" x2="334.4" y2="739.9" stroke="#222" stroke-width="0.7"/>
<polygon points="348.5,758.3 357.5,754.6 351.2,751.1 342.2,754.7" fill="#c8bbb0"/>
<polygon points="402.1,718.5 413.7,713.8 397.1,705.4 385.5,709.9" fill="#c8bbb0"/>
<line x1="390.7" y1="712.6" x2="402.3" y2="708.0" stroke="#222" stroke-width="0.7"/>
<line x1="396.4" y1="715.5" x2="407.9" y2="710.9" stroke="#222" stroke-width="0.7"/>
<polygon points="423.2,727.8 431.5,724.4 425.1,721.2 416.8,724.5" fill="#c8bbb0"/>
<polygon points="470.9,691.1 481.6,686.9 464.8,679.1 454.1,683.2" fill="#c8bbb0"/>
<line x1="459.3" y1="685.7" x2="470.0" y2="681.5" stroke="#222" stroke-width="0.7"/>
<line x1="465.1" y1="688.4" x2="475.8" y2="684.2" stroke="#222" stroke-width="0.7"/>
<polygon points="492.0,699.8 499.7,696.7 493.2,693.6 485.6,696.7" fill="#c8bbb0"/>
<polygon points="534.5,665.8 544.4,661.9 527.6,654.7 517.6,658.5" fill="#c8bbb0"/>
<line x1="522.9" y1="660.8" x2="532.8" y2="656.9" stroke="#222" stroke-width="0.7"/>
<line x1="528.7" y1="663.3" x2="538.6" y2="659.4" stroke="#222" stroke-width="0.7"/>
<polygon points="555.6,673.9 562.7,671.0 556.2,668.2 549.1,671.0" fill="#c8bbb0"/>
<polygon points="593.5,642.4 602.7,638.7 585.8,632.0 576.6,635.6" fill="#c8bbb0"/>
<line x1="581.9" y1="637.7" x2="591.1" y2="634.1" stroke="#222" stroke-width="0.7"/>
<line x1="587.7" y1="640.0" x2="596.9" y2="636.4" stroke="#222" stroke-width="0.7"/>
<polygon points="614.5,649.8 621.1,647.1 614.7,644.6 608.1,647.2" fill="#c8bbb0"/>
<polygon points="648.4,620.6 657.0,617.2 640.1,610.9 631.5,614.2" fill="#c8bbb0"/>
<line x1="636.8" y1="616.2" x2="645.4" y2="612.8" stroke="#222" stroke-width="0.7"/>
<line x1="642.6" y1="618.4" x2="651.2" y2="615.0" stroke="#222" stroke-width="0.7"/>
<polygon points="669.3,627.5 675.5,625.0 669.0,622.6 662.9,625.1" fill="#c8bbb0"/>
<polygon points="699.6,600.2 707.6,597.0 690.8,591.2 682.8,594.3" fill="#c8bbb0"/>
<line x1="688.0" y1="596.2" x2="696.1" y2="593.0" stroke="#222" stroke-width="0.7"/>
<line x1="693.8" y1="598.2" x2="701.8" y2="595.0" stroke="#222" stroke-width="0.7"/>
<polygon points="720.4,606.7 726.1,604.4 719.7,602.1 714.0,604.4" fill="#c8bbb0"/>
<polygon points="747.5,581.2 755.0,578.2 738.2,572.7 730.7,575.7" fill="#c8bbb0"/>
<line x1="735.9" y1="577.4" x2="743.5" y2="574.4" stroke="#222" stroke-width="0.7"/>
<line x1="741.7" y1="579.3" x2="749.2" y2="576.3" stroke="#222" stroke-width="0.7"/>
<polygon points="768.1,587.3 773.4,585.1 767.0,583.0 761.7,585.1" fill="#c8bbb0"/>
<polygon points="792.3,563.4 799.3,560.6 782.7,555.4 775.7,558.2" fill="#c8bbb0"/>
<line x1="780.9" y1="559.8" x2="787.9" y2="557.0" stroke="#222" stroke-width="0.7"/>
<line x1="786.6" y1="561.6" x2="793.6" y2="558.8" stroke="#222" stroke-width="0.7"/>
<polygon points="812.7,569.1 817.7,567.0 811.4,565.0 806.4,567.1" fill="#c8bbb0"/>
<polygon points="834.4,546.7 841.0,544.0 824.5,539.2 817.9,541.8" fill="#c8bbb0"/>
<line x1="823.0" y1="543.3" x2="829.7" y2="540.7" stroke="#222" stroke-width="0.7"/>
<line x1="828.7" y1="545.0" x2="835.3" y2="542.4" stroke="#222" stroke-width="0.7"/>
<polygon points="854.6,552.0 859.3,550.1 853.0,548.2 848.3,550.1" fill="#c8bbb0"/>
<polygon points="874.0,530.9 880.2,528.5 863.9,523.9 857.6,526.3" fill="#c8bbb0"/>
<line x1="862.7" y1="527.8" x2="869.0" y2="525.3" stroke="#222" stroke-width="0.7"/>
<line x1="868.3" y1="529.3" x2="874.6" y2="526.9" stroke="#222" stroke-width="0.7"/>
<polygon points="894.0,535.9 898.4,534.1 892.2,532.4 887.7,534.2" fill="#c8bbb0"/>
<polygon points="911.3,516.1 917.2,513.8 901.0,509.5 895.1,511.8" fill="#c8bbb0"/>
<line x1="900.1" y1="513.1" x2="906.0" y2="510.8" stroke="#222" stroke-width="0.7"/>
<line x1="905.7" y1="514.6" x2="911.6" y2="512.3" stroke="#222" stroke-width="0.7"/>
<polygon points="931.1,520.8 935.3,519.1 929.1,517.5 924.9,519.2" fill="#c8bbb0"/>
<polygon points="946.5,502.1 952.1,499.9 936.0,495.8 930.4,498.0" fill="#c8bbb0"/>
<line x1="935.5" y1="499.3" x2="941.0" y2="497.1" stroke="#222" stroke-width="0.7"/>
<line x1="941.0" y1="500.7" x2="946.5" y2="498.5" stroke="#222" stroke-width="0.7"/>
<polygon points="966.1,506.6 970.0,505.0 963.9,503.4 959.9,505.0" fill="#c8bbb0"/>
<polygon points="979.8,488.9 985.1,486.8 969.2,482.9 963.9,485.0" fill="#c8bbb0"/>
<line x1="968.9" y1="486.2" x2="974.1" y2="484.1" stroke="#222" stroke-width="0.7"/>
<line x1="974.3" y1="487.5" x2="979.6" y2="485.5" stroke="#222" stroke-width="0.7"/>
<polygon points="999.1,493.1 1002.9,491.6 996.8,490.1 993.1,491.6" fill="#c8bbb0"/>
<polygon points="1011.4,476.3 1016.3,474.4 1000.6,470.7 995.6,472.7" fill="#c8bbb0"/>
<line x1="1000.5" y1="473.8" x2="1005.5" y2="471.8" stroke="#222" stroke-width="0.7"/>
<line x1="1005.9" y1="475.1" x2="1010.9" y2="473.1" stroke="#222" stroke-width="0.7"/>
<polygon points="1030.4,480.3 1033.9,478.9 1028.0,477.5 1024.4,478.9" fill="#c8bbb0"/>
<polygon points="1041.3,464.5 1046.0,462.6 1030.4,459.1 1025.7,461.0" fill="#c8bbb0"/>
<line x1="1030.5" y1="462.1" x2="1035.3" y2="460.2" stroke="#222" stroke-width="0.7"/>
<line x1="1035.9" y1="463.3" x2="1040.6" y2="461.4" stroke="#222" stroke-width="0.7"/>
<polygon points="1060.1,468.3 1063.4,466.9 1057.5,465.6 1054.1,466.9" fill="#c8bbb0"/>
<polygon points="1069.7,453.2 1074.1,451.4 1058.8,448.1 1054.2,449.9" fill="#c8bbb0"/>
<line x1="1059.1" y1="450.9" x2="1063.6" y2="449.1" stroke="#222" stroke-width="0.7"/>
<line x1="1064.3" y1="452.0" x2="1068.8" y2="450.3" stroke="#222" stroke-width="0.7"/>
<polygon points="1088.2,456.8 1091.4,455.5 1085.6,454.2 1082.4,455.5" fill="#c8bbb0"/>
<polygon points="1096.7,442.5 1100.9,440.8 1085.7,437.6 1081.4,439.3" fill="#c8bbb0"/>
<line x1="1086.2" y1="440.3" x2="1090.5" y2="438.6" stroke="#222" stroke-width="0.7"/>
<line x1="1091.4" y1="441.4" x2="1095.7" y2="439.7" stroke="#222" stroke-width="0.7"/>
<polygon points="1115.0,445.9 1118.0,444.7 1112.2,443.5 1109.2,444.7" fill="#c8bbb0"/>
<polygon points="1122.4,432.2 1126.4,430.6 1111.4,427.6 1107.3,429.2" fill="#c8bbb0"/>
<line x1="1112.0" y1="430.2" x2="1116.1" y2="428.6" stroke="#222" stroke-width="0.7"/>
<line x1="1117.2" y1="431.2" x2="1121.2" y2="429.6" stroke="#222" stroke-width="0.7"/>
<polygon points="1140.4,435.5 1143.3,434.3 1137.6,433.2 1134.7,434.4" fill="#c8bbb0"/>
<polygon points="1146.8,422.5 1150.7,421.0 1135.9,418.1 1132.0,419.6" fill="#c8bbb0"/>
<line x1="1136.6" y1="420.5" x2="1140.5" y2="419.0" stroke="#222" stroke-width="0.7"/>
<line x1="1141.7" y1="421.5" x2="1145.6" y2="420.0" stroke="#222" stroke-width="0.7"/>
<polygon points="1164.7,425.6 1167.4,424.5 1161.8,423.4 1159.0,424.5" fill="#c8bbb0"/>
<polygon points="1170.2,413.2 1173.9,411.7 1159.2,409.0 1155.5,410.5" fill="#c8bbb0"/>
<line x1="1160.1" y1="411.3" x2="1163.8" y2="409.9" stroke="#222" stroke-width="0.7"/>
<line x1="1165.2" y1="412.3" x2="1168.9" y2="410.8" stroke="#222" stroke-width="0.7"/>
<polygon points="1187.8,416.2 1190.5,415.1 1184.9,414.1 1182.2,415.2" fill="#c8bbb0"/>
<polygon points="1192.6,404.3 1196.1,402.9 1181.6,400.3 1178.0,401.7" fill="#c8bbb0"/>
<line x1="1182.6" y1="402.5" x2="1186.1" y2="401.1" stroke="#222" stroke-width="0.7"/>
<line x1="1187.5" y1="403.4" x2="1191.1" y2="402.0" stroke="#222" stroke-width="0.7"/>
<polygon points="1209.9,407.2 1212.4,406.2 1206.9,405.2 1204.4,406.2" fill="#c8bbb0"/>
<polygon points="1213.9,395.9 1217.3,394.5 1203.0,392.0 1199.5,393.3" fill="#c8bbb0"/>
<line x1="1204.0" y1="394.1" x2="1207.4" y2="392.8" stroke="#222" stroke-width="0.7"/>
<line x1="1209.0" y1="395.0" x2="1212.4" y2="393.7" stroke="#222" stroke-width="0.7"/>
<polygon points="1231.0,398.6 1233.4,397.6 1228.0,396.7 1225.6,397.6" fill="#c8bbb0"/>
<polygon points="1234.3,387.7 1237.6,386.4 1223.4,384.1 1220.1,385.3" fill="#c8bbb0"/>
<line x1="1224.6" y1="386.1" x2="1227.9" y2="384.8" stroke="#222" stroke-width="0.7"/>
<line x1="1229.5" y1="386.9" x2="1232.7" y2="385.6" stroke="#222" stroke-width="0.7"/>
<polygon points="1251.3,390.3 1253.5,389.4 1248.2,388.5 1245.9,389.4" fill="#c8bbb0"/>
<polygon points="1253.9,380.0 1257.0,378.7 1243.0,376.4 1239.9,377.6" fill="#c8bbb0"/>
<line x1="1244.3" y1="378.4" x2="1247.4" y2="377.1" stroke="#222" stroke-width="0.7"/>
<line x1="1249.1" y1="379.2" x2="1252.2" y2="377.9" stroke="#222" stroke-width="0.7"/>
<polygon points="1270.6,382.5 1272.8,381.6 1267.5,380.7 1265.3,381.6" fill="#c8bbb0"/>
<polygon points="1272.7,372.5 1275.7,371.3 1261.9,369.1 1258.8,370.3" fill="#c8bbb0"/>
<line x1="1263.2" y1="371.0" x2="1266.2" y2="369.8" stroke="#222" stroke-width="0.7"/>
<line x1="1267.9" y1="371.7" x2="1270.9" y2="370.6" stroke="#222" stroke-width="0.7"/>
<polygon points="1289.2,374.9 1291.3,374.0 1286.0,373.2 1283.9,374.1" fill="#c8bbb0"/>
<polygon points="1290.7,365.3 1293.6,364.2 1279.9,362.1 1277.0,363.2" fill="#c8bbb0"/>
<line x1="1281.3" y1="363.9" x2="1284.2" y2="362.7" stroke="#222" stroke-width="0.7"/>
<line x1="1286.0" y1="364.6" x2="1288.9" y2="363.5" stroke="#222" stroke-width="0.7"/>
<polygon points="1307.0,367.6 1309.0,366.8 1303.8,366.0 1301.8,366.8" fill="#c8bbb0"/>
<polygon points="1308.0,358.5 1310.8,357.4 1297.3,355.3 1294.5,356.4" fill="#c8bbb0"/>
<line x1="1298.7" y1="357.1" x2="1301.5" y2="356.0" stroke="#222" stroke-width="0.7"/>
<line x1="1303.4" y1="357.8" x2="1306.1" y2="356.7" stroke="#222" stroke-width="0.7"/>
<polygon points="1324.1,360.7 1326.0,359.9 1320.9,359.1 1319.0,359.9" fill="#c8bbb0"/>
<polygon points="1324.7,351.9 1327.3,350.8 1314.0,348.8 1311.3,349.9" fill="#c8bbb0"/>
<line x1="1315.5" y1="350.5" x2="1318.2" y2="349.5" stroke="#222" stroke-width="0.7"/>
<line x1="1320.1" y1="351.2" x2="1322.7" y2="350.1" stroke="#222" stroke-width="0.7"/>
<polygon points="1340.5,354.0 1342.4,353.2 1337.3,352.5 1335.4,353.2" fill="#c8bbb0"/>
<polygon points="1340.7,345.5 1343.2,344.5 1330.0,342.6 1327.5,343.6" fill="#c8bbb0"/>
<line x1="1331.6" y1="344.2" x2="1334.2" y2="343.2" stroke="#222" stroke-width="0.7"/>
<line x1="1336.1" y1="344.8" x2="1338.7" y2="343.8" stroke="#222" stroke-width="0.7"/>
<polygon points="1356.3,347.5 1358.1,346.8 1353.1,346.1 1351.3,346.8" fill="#c8bbb0"/>
<polygon points="302.3,593.3 297.5,598.5 293.5,606.0 288.0,623.0 278.5,650.0 272.8,669.0 270.0,684.0 271.0,689.0 273.5,692.5 286.0,701.0 289.0,707.0 287.0,710.0 291.0,712.5 297.5,717.0 307.0,728.0 313.0,732.0 379.6,707.9 1281.8,359.3 1285.0,356.5 1290.5,349.0 1292.5,341.0 1291.5,323.0 1289.5,310.5 1286.0,307.8 1284.4,308.5 1243.9,302.4 303.0,593.2" fill="#000" stroke="#000" stroke-width="1" stroke-linejoin="round"/>
<ellipse cx="374.2" cy="720.3" rx="23.1" ry="17.6" fill="#000" transform="rotate(-20 374.2 720.3)"/>
<ellipse cx="447.5" cy="691.6" rx="22.3" ry="17.0" fill="#000" transform="rotate(-20 447.5 691.6)"/>
<ellipse cx="620.7" cy="623.6" rx="20.4" ry="15.5" fill="#000" transform="rotate(-20 620.7 623.6)"/>
<ellipse cx="675.6" cy="602.1" rx="19.8" ry="15.0" fill="#000" transform="rotate(-20 675.6 602.1)"/>
<ellipse cx="721.2" cy="584.2" rx="19.3" ry="14.6" fill="#000" transform="rotate(-20 721.2 584.2)"/>
<ellipse cx="769.2" cy="565.4" rx="18.7" ry="14.2" fill="#000" transform="rotate(-20 769.2 565.4)"/>
<ellipse cx="903.1" cy="512.9" rx="17.1" ry="13.0" fill="#000" transform="rotate(-20 903.1 512.9)"/>
<ellipse cx="940.0" cy="498.4" rx="16.7" ry="12.7" fill="#000" transform="rotate(-20 940.0 498.4)"/>
<ellipse cx="971.0" cy="486.2" rx="16.3" ry="12.4" fill="#000" transform="rotate(-20 971.0 486.2)"/>
<ellipse cx="1004.1" cy="473.3" rx="15.9" ry="12.1" fill="#000" transform="rotate(-20 1004.1 473.3)"/>
<ellipse cx="1096.2" cy="437.1" rx="14.8" ry="11.2" fill="#000" transform="rotate(-20 1096.2 437.1)"/>
<ellipse cx="1122.8" cy="426.7" rx="14.4" ry="11.0" fill="#000" transform="rotate(-20 1122.8 426.7)"/>
<ellipse cx="1145.4" cy="417.8" rx="14.1" ry="10.8" fill="#000" transform="rotate(-20 1145.4 417.8)"/>
<ellipse cx="1169.6" cy="408.3" rx="13.8" ry="10.5" fill="#000" transform="rotate(-20 1169.6 408.3)"/>
<ellipse cx="1225.5" cy="386.4" rx="13.1" ry="10.0" fill="#000" transform="rotate(-20 1225.5 386.4)"/>
<ellipse cx="1246.1" cy="378.3" rx="12.9" ry="9.8" fill="#000" transform="rotate(-20 1246.1 378.3)"/>
<g clip-path="url(#st)"><defs><linearGradient id="ggb" gradientUnits="userSpaceOnUse" x1="0" y1="105" x2="0" y2="420"><stop offset="0" stop-color="#fff" stop-opacity="0.32"/><stop offset="0.25" stop-color="#fff" stop-opacity="0.52"/><stop offset="1" stop-color="#fff" stop-opacity="1"/></linearGradient><linearGradient id="gGb" gradientUnits="userSpaceOnUse" x1="0" y1="105" x2="0" y2="330"><stop offset="0" stop-color="#fff" stop-opacity="0.55"/><stop offset="1" stop-color="#fff" stop-opacity="1"/></linearGradient><mask id="gMb" maskUnits="userSpaceOnUse" x="0" y="0" width="2000" height="1052"><rect x="0" y="0" width="2000" height="1052" fill="url(#gGb)"/></mask><mask id="gmb" maskUnits="userSpaceOnUse" x="0" y="0" width="2000" height="1052"><rect x="0" y="0" width="2000" height="1052" fill="url(#ggb)"/></mask></defs>
<g mask="url(#gmb)"><path d="M152020.3 7814.0L112689.2 5767.5 M141511.2 7508.0L52014.6 2696.6 M142439.9 7685.4L40853.5 2131.7 M143413.8 7871.4L33577.1 1763.5 M144436.5 8066.6L28458.0 1504.4 M133163.8 7560.8L24660.5 1312.2 M133899.4 7740.8L21731.5 1163.9 M134671.3 7929.6L19403.5 1046.1 M135482.0 8128.0L17508.8 950.2 M124689.5 7614.5L15936.7 870.7 M125789.3 7988.9L13478.7 746.3 M115769.8 7492.1L12499.8 696.7 M116085.6 7668.9L11645.2 653.5 M116416.9 7854.4L10892.6 615.4 M116764.7 8049.0L10224.9 581.6 M107235.2 7544.8L9628.4 551.4 M107349.0 7724.2L9092.3 524.3 M107468.4 7912.5L8607.9 499.7 M107593.8 8110.2L8168.0 477.5 M98476.6 7780.4L7399.5 438.6 M98377.4 7971.5L7061.8 421.5 M90069.6 7476.2L6750.3 405.7 M89774.6 7652.5L6462.1 391.1 M89465.2 7837.4L6194.7 377.6 M89140.4 8031.5L5946.0 365.0 M81348.5 7528.7L5713.9 353.3 M80842.4 7707.6L5496.9 342.3 M80311.5 7895.3L5293.6 332.0 M72495.2 7582.0L4923.2 313.2 M71771.6 7763.6L4753.9 304.7 M71012.2 7954.2L4594.1 296.6 M64410.5 7460.3L4443.1 288.9 M63506.6 7636.1L4300.0 281.7 M62558.7 7820.4L4164.3 274.8 M61563.6 8014.0L4035.5 268.3 M55503.5 7512.7L3912.9 262.1 M54379.5 7691.1L3796.3 256.2 M51962.3 8074.7L3579.0 245.2 M46461.5 7565.8L3477.6 240.1 M45110.9 7746.9L3380.6 235.2 M43693.5 7936.8L3287.9 230.5 M38792.3 7444.5L3198.9 226.0 M37281.5 7619.7L3113.7 221.7 M35697.3 7803.5L3031.9 217.5 M34034.2 7996.5L2953.2 213.5 M29700.0 7496.7L2877.7 209.7 M26135.3 7861.1L2735.0 202.5 M24218.7 8057.0L2667.5 199.1 M20470.0 7549.6L2602.5 195.8 M18494.5 7730.1L2539.8 192.6 M16421.4 7919.6L2479.2 189.6 M13215.0 7428.7L2420.7 186.6 M11099.3 7603.4L2364.2 183.7 M8880.8 7786.6L2309.5 181.0 M6551.9 7979.0L2256.6 178.3 M1584.5 7658.0L2155.8 173.2 M-884.3 7844.0L2107.7 170.8 M-3476.9 8039.4L2061.1 168.4 M-5479.3 7533.5L2015.9 166.1 M-8077.8 7713.5L1972.0 163.9 M-10804.4 7902.3L1929.4 161.7 M-12321.4 7412.9L1888.0 159.6 M-15040.2 7587.1L1847.8 157.6 M-17890.9 7769.8L1808.7 155.6 M-21782.5 7464.7L1733.7 151.8 M-24748.0 7641.5L1697.7 150.0 M-27858.4 7827.0L1662.6 148.2 M-31124.7 8021.7L1628.5 146.5 M-31386.7 7517.4L1595.2 144.8 M-34606.0 7696.8L1562.8 143.2 M-37984.0 7885.1L1531.2 141.6 M-37817.2 7397.1L1500.4 140.0 M-41137.1 7570.8L1470.3 138.5 M-48271.4 7944.1L1412.4 135.6 M-47461.8 7448.8L1384.4 134.1 M-51037.1 7625.1L1357.1 132.8 M-54787.0 7810.0L1330.4 131.4 M-58724.7 8004.1L1304.3 130.1 M-57252.1 7501.3L1278.9 128.8 M-61090.3 7680.2L1253.9 127.5 M-65117.4 7867.9L1229.6 126.3 M-63272.4 7381.4L1205.7 125.1 M-71300.1 7736.1L1159.6 122.8 M-75612.8 7926.7L1137.3 121.6 M-73099.9 7432.9L1115.4 120.5 M-77283.1 7608.7L1094.0 119.4 M-81670.4 7793.0L1073.0 118.4 M-86277.2 7986.5L1052.4 117.3 M-83075.8 7485.2L1032.3 116.3 M-87530.7 7663.6L1012.5 115.3 M-92204.8 7850.7L993.2 114.3 M-93203.3 7538.3L955.6 112.4 M-97937.9 7719.4L937.3 111.5 M-102907.4 7909.4L919.4 110.6 M-98697.0 7417.0L901.8 109.7 M-103486.0 7592.3L884.6 108.8 M-108508.5 7776.0L867.6 108.0 M-113782.2 7969.0L851.0 107.1 M-108857.7 7469.2L834.7 106.3 M-113927.4 7647.0L818.6 105.5 M-124833.3 8029.6L787.4 103.9 M-119172.8 7522.1L772.2 103.2 M-124531.4 7702.6L757.3 102.4 M-130155.4 7892.1L742.6 101.7 M-124253.0 7401.2L728.2 100.9 M-129645.9 7575.9L714.0 100.2 M-133549.6 7829.7L-114685.7 6718.0 M-124370.1 7444.0L-64377.4 3833.0 M-126502.1 7909.3L-33589.1 2067.4 M-117589.4 7516.0L-26871.3 1682.1 M-118426.1 7746.0L-22278.6 1418.7 M-119315.5 7990.5L-18940.2 1227.3 M-110681.5 7589.4L-16404.0 1081.9 M-111313.4 7823.9L-14411.9 967.6 M-103248.4 7439.2L-12805.8 875.5 M-103642.9 7664.2L-11483.3 799.7 M-104062.0 7903.3L-10375.6 736.2 M-96469.9 7740.5L-8624.0 635.7 M-96667.7 7984.3L-7919.7 595.3 M-89188.8 7584.3L-7301.7 559.9 M-89158.5 7818.1L-6755.1 528.5 M-82200.0 7434.4L-6268.1 500.6 M-81959.8 7658.9L-5831.5 475.6 M-81704.7 7897.3L-5437.9 453.0 M-75052.8 7506.1L-5081.2 432.5 M-74592.9 7734.9L-4756.5 413.9 M-67772.1 7579.1L-4187.1 381.3 M-67084.2 7812.4L-3936.2 366.9 M-61224.5 7429.6L-3704.3 353.6 M-60354.0 7653.6L-3489.4 341.3 M-59429.6 7891.4L-3289.6 329.8 M-53896.0 7501.1L-3103.5 319.1 M-52794.8 7729.4L-2929.7 309.2 M-51624.6 7972.0L-2767.0 299.8 M-46430.9 7574.0L-2614.3 291.1 M-43664.9 8054.1L-2335.6 275.1 M-38825.2 7648.3L-2208.1 267.8 M-37236.3 7885.5L-2087.7 260.9 M-32813.1 7496.2L-1973.7 254.3 M-31075.0 7723.9L-1865.6 248.1 M-29228.3 7965.9L-1763.0 242.3 M-25164.9 7568.9L-1665.5 236.7 M-23176.2 7801.0L-1572.8 231.3 M-21061.9 8047.8L-1484.4 226.3 M-15124.3 7879.6L-1319.6 216.8 M-11803.6 7491.3L-1242.7 212.4 M-9433.2 7718.4L-1169.0 208.2 M-6915.0 7959.8L-1098.5 204.1 M-3973.7 7563.8L-1030.9 200.3 M-1341.5 7795.4L-966.1 196.6 M1456.5 8041.5L-903.8 193.0 M4003.2 7637.7L-844.0 189.6 M6906.7 7873.8L-786.4 186.3 M12131.0 7713.0L-677.6 180.0 M15316.0 7953.7L-626.2 177.1 M17143.2 7558.7L-576.6 174.2 M20414.3 7789.7L-528.7 171.5 M23891.0 8035.2L-482.5 168.8 M25303.6 7632.4L-437.8 166.3 M28857.3 7867.9L-394.6 163.8 M29996.5 7481.5L-352.8 161.4 M33618.2 7707.5L-312.4 159.1 M38186.0 7553.7L-235.3 154.6 M42091.4 7784.1L-198.5 152.5 M46242.0 8028.9L-162.8 150.5 M46528.6 7627.2L-128.2 148.5 M50727.9 7862.1L-94.6 146.6 M50787.9 7476.6L-62.0 144.7 M55028.6 7702.1L-30.3 142.9 M59532.4 7941.6L0.6 141.1 M59155.3 7548.6L30.5 139.4 M68509.8 8022.7L88.0 136.1 M67678.7 7622.0L115.6 134.5 M72518.9 7856.3L142.5 133.0 M77665.3 8105.4L168.7 131.5 M76362.7 7696.7L194.2 130.0 M81518.8 7935.6L219.1 128.6 M80051.3 7543.6L243.4 127.2 M85211.8 7772.9L267.0 125.8 M90695.0 8016.5L290.1 124.5 M94230.8 7850.5L334.7 122.0 M100053.0 8099.0L356.2 120.7 M97621.0 7691.4L377.1 119.5 M103424.5 7929.6L397.6 118.3 M100874.5 7538.6L417.7 117.2 M106655.9 7767.3L437.3 116.1 M112798.1 8010.3L456.4 115.0 M109755.8 7611.6L475.2 113.9 M115863.9 7844.7L493.5 112.9 M118803.7 7686.0L529.0 110.8 M125250.0 7923.7L546.2 109.8 M121625.2 7533.6L563.0 108.9 M128023.1 7761.8L579.5 107.9 M134819.5 8004.1L595.7 107.0 M130683.4 7606.5L611.5 106.1 M137418.7 7839.0L627.0 105.2 M144577.7 8086.2L642.2 104.3 M139911.4 7680.7L657.1 103.5 M142303.8 7528.7L686.1 101.8 M149313.8 7756.2L700.2 101.0 M156759.6 7998.0L714.0 100.2" stroke="#858585" stroke-width="0.9" fill="none"/></g>
<g mask="url(#gMb)"><path d="M153248.1 8006.3L71304.4 3672.9 M125226.1 7797.1L14611.3 803.6 M98571.2 7598.2L7766.9 457.2 M79753.9 8092.4L5102.7 322.3 M53200.5 7878.2L3685.1 250.6 M27960.2 7674.5L2805.0 206.0 M3938.0 7480.7L2205.4 175.7 M-20883.3 7961.5L1770.7 153.7 M-44617.8 7752.9L1441.0 137.0 M-67191.4 7554.6L1182.4 123.9 M-88687.1 7365.6L974.2 113.4 M-119246.4 7833.6L802.9 104.7 M-125403.9 7669.6L-44350.3 2684.5 M-96283.8 7511.1L-9434.1 682.2 M-74104.2 7978.1L-4459.6 396.9 M-45090.3 7806.7L-2470.8 282.8 M-17373.0 7643.0L-1400.1 221.4 M9132.8 7486.4L-731.0 183.1 M37465.0 7947.6L-273.2 156.8 M63690.5 7778.5L59.7 137.7 M88754.3 7616.8L312.7 123.2 M122357.0 8092.6L511.4 111.8 M146995.8 7917.7L671.7 102.6" stroke="#4e4e4e" stroke-width="1.1" fill="none"/></g>
<path d="M-129645.9 7575.9L714.0 100.2 M156759.6 7998.0L714.0 100.2" stroke="#5a5a5a" stroke-width="1.2" fill="none"/></g>
<polygon points="351.0,616.8 721.2,494.5 722.0,497.4 352.1,620.4" fill="#4e4842"/>
<polygon points="352.1,620.4 722.0,497.4 723.1,501.7 353.6,625.7" fill="#292522"/>
<polygon points="353.6,625.7 723.1,501.7 724.1,506.0 355.1,631.1" fill="#110f0e"/>
<polygon points="303.1,594.8 672.0,480.5 721.2,494.5 351.0,616.8" fill="#c8bbb0" stroke="#0a0a0a" stroke-width="1.2" stroke-linejoin="round"/>
<line x1="321.8" y1="603.4" x2="691.3" y2="486.0" stroke="#1a1a1a" stroke-width="0.9"/>
<polygon points="728.9,491.9 983.3,408.0 984.0,410.3 729.8,494.8" fill="#4e4842"/>
<polygon points="729.8,494.8 984.0,410.3 984.8,413.9 730.8,499.1" fill="#292522"/>
<polygon points="730.8,499.1 984.8,413.9 985.5,417.4 731.9,503.4" fill="#110f0e"/>
<polygon points="679.8,478.1 936.5,398.5 983.3,408.0 728.9,491.9" fill="#c8bbb0" stroke="#0a0a0a" stroke-width="1.2" stroke-linejoin="round"/>
<line x1="699.1" y1="483.5" x2="954.9" y2="402.2" stroke="#1a1a1a" stroke-width="0.9"/>
<polygon points="988.5,406.2 1163.1,348.6 1163.7,350.6 989.2,408.6" fill="#4e4842"/>
<polygon points="989.2,408.6 1163.7,350.6 1164.3,353.6 990.0,412.1" fill="#292522"/>
<polygon points="990.0,412.1 1164.3,353.6 1164.9,356.7 990.7,415.7" fill="#110f0e"/>
<polygon points="941.8,396.8 1119.6,341.7 1163.1,348.6 988.5,406.2" fill="#c8bbb0" stroke="#0a0a0a" stroke-width="1.2" stroke-linejoin="round"/>
<line x1="960.2" y1="400.5" x2="1136.8" y2="344.4" stroke="#1a1a1a" stroke-width="0.9"/>
<polygon points="1166.9,347.3 1284.4,308.5 1284.9,310.3 1167.4,349.4" fill="#4e4842"/>
<polygon points="1167.4,349.4 1284.9,310.3 1285.4,313.0 1168.0,352.4" fill="#292522"/>
<polygon points="1168.0,352.4 1285.4,313.0 1285.9,315.7 1168.7,355.4" fill="#110f0e"/>
<polygon points="1123.4,340.5 1243.8,303.2 1284.4,308.5 1166.9,347.3" fill="#c8bbb0" stroke="#0a0a0a" stroke-width="1.2" stroke-linejoin="round"/>
<line x1="1140.6" y1="343.2" x2="1259.9" y2="305.3" stroke="#1a1a1a" stroke-width="0.9"/>
<path d="M456.3,546.0 L550.0,515.8 L565.9,523.7 L577.1,533.2 L489.9,561.3 L467.9,556.4 Z" fill="#0a0a0a" stroke="#000" stroke-width="1.6" stroke-linejoin="round"/>
<polygon points="478.0,550.7 558.7,524.5 572.7,532.0 498.1,556.5" fill="url(#hat)"/>
<polygon points="472.9,544.1 548.6,519.6 555.5,523.7 485.2,546.6" fill="#b4a89d"/>
<line x1="474.8" y1="546.7" x2="554.0" y2="521.3" stroke="#3a3530" stroke-width="0.6"/>
<path d="M797.0,440.8 L862.5,420.0 L875.6,425.4 L885.6,431.8 L828.4,451.7 L809.5,448.2 Z" fill="#0a0a0a" stroke="#000" stroke-width="1.6" stroke-linejoin="round"/>
<polygon points="815.6,444.2 870.5,425.9 882.2,431.0 833.1,448.3" fill="url(#hat)"/>
<polygon points="809.6,439.6 862.1,422.6 867.9,425.4 819.9,441.3" fill="#b4a89d"/>
<line x1="811.8" y1="441.4" x2="866.4" y2="423.7" stroke="#3a3530" stroke-width="0.6"/>
<path d="M1021.6,370.8 L1072.5,355.0 L1082.6,359.0 L1090.4,363.9 L1051.6,378.1 L1034.7,375.8 Z" fill="#0a0a0a" stroke="#000" stroke-width="1.6" stroke-linejoin="round"/>
<polygon points="1038.5,373.0 1078.8,359.4 1087.8,363.2 1054.2,375.7" fill="url(#hat)"/>
<polygon points="1032.1,369.8 1072.2,357.0 1076.8,359.0 1041.2,370.9" fill="#b4a89d"/>
<line x1="1034.5" y1="371.0" x2="1075.6" y2="357.8" stroke="#3a3530" stroke-width="0.6"/>
<path d="M1185.4,319.9 L1225.0,308.7 L1234.0,312.0 L1241.3,315.9 L1213.6,325.6 L1198.3,323.7 Z" fill="#0a0a0a" stroke="#000" stroke-width="1.6" stroke-linejoin="round"/>
<polygon points="1200.6,321.7 1231.0,312.2 1239.1,315.4 1214.9,323.9" fill="url(#hat)"/>
<polygon points="1194.1,319.2 1225.1,310.2 1229.3,311.9 1202.3,320.2" fill="#b4a89d"/>
<line x1="1196.6" y1="320.2" x2="1228.0" y2="310.9" stroke="#3a3530" stroke-width="0.6"/>
<ellipse cx="383.0" cy="589.3" rx="1.4" ry="1.9" fill="#050505"/><rect x="380.8" y="590.5" width="4.4" height="1.8" fill="#050505"/>
<ellipse cx="668.0" cy="485.4" rx="1.3" ry="1.7" fill="#050505"/><rect x="666.0" y="486.5" width="4.0" height="1.6" fill="#050505"/>
<ellipse cx="640.0" cy="506.9" rx="1.3" ry="1.7" fill="#050505"/><rect x="638.0" y="508.0" width="4.0" height="1.6" fill="#050505"/>
<ellipse cx="736.0" cy="476.4" rx="1.3" ry="1.7" fill="#050505"/><rect x="734.0" y="477.5" width="4.0" height="1.6" fill="#050505"/>
<ellipse cx="891.0" cy="426.5" rx="1.1" ry="1.5" fill="#050505"/><rect x="889.2" y="427.5" width="3.5" height="1.4" fill="#050505"/>
<ellipse cx="977.5" cy="396.5" rx="1.1" ry="1.5" fill="#050505"/><rect x="975.7" y="397.5" width="3.5" height="1.4" fill="#050505"/>
<ellipse cx="1160.0" cy="330.2" rx="1.0" ry="1.3" fill="#050505"/><rect x="1158.5" y="331.0" width="3.1" height="1.3" fill="#050505"/>
<ellipse cx="1156.0" cy="339.2" rx="1.0" ry="1.3" fill="#050505"/><rect x="1154.5" y="340.0" width="3.1" height="1.3" fill="#050505"/>
<ellipse cx="1246.0" cy="303.6" rx="0.8" ry="1.1" fill="#050505"/><rect x="1244.7" y="304.3" width="2.6" height="1.1" fill="#050505"/>
<ellipse cx="1263.6" cy="301.9" rx="0.8" ry="1.1" fill="#050505"/><rect x="1262.3" y="302.6" width="2.6" height="1.1" fill="#050505"/>
<ellipse cx="1016.5" cy="374.7" rx="1.0" ry="1.3" fill="#050505"/><rect x="1015.0" y="375.5" width="3.1" height="1.3" fill="#050505"/>
<path d="M333.5 598.5 l1.2 -4.8 q3 -3.2 6.5 -2.6 l-0.6 1.8 l-3.5 1.2 l-0.8 3.6 z" fill="#050505"/>
<line x1="702.7" y1="471.0" x2="751.7" y2="484.4" stroke="#222" stroke-width="0.8" stroke-dasharray="3 1"/>
<path d="M672.0 480.5 Q695.1 493.8 724.3 502.1 L732.0 499.5 Q704.9 489.8 679.8 478.1 Z" fill="#000"/>
<path d="M936.5 398.5 Q958.5 408.6 985.9 414.1 L991.1 412.4 Q965.5 405.5 941.8 396.8 Z" fill="#000"/>
<path d="M1119.6 341.7 Q1140.2 349.6 1165.4 353.8 L1169.1 352.5 Q1145.5 347.3 1123.4 340.5 Z" fill="#000"/>
<path d="M727.2,467.4 L751.2,459.6 L771.6,465.6 L748.8,474.0 Z" fill="none" stroke="#000" stroke-width="2.5" stroke-linejoin="round"/>
<path d="M736.8,456.0 L761.4,462.6 L753.7,469.6 L743.7,466.6 Z" fill="#000"/>
<path d="M751.2 441.6 L736.8 456.0 M754.2 443.2 L749.7 463.6" fill="none" stroke="#000" stroke-width="2.0"/>
<path d="M738.6 439.8 L739.8 436.8 Q753.0 434.2 765.6 441.0 L768.6 445.8" fill="none" stroke="#000" stroke-width="2.6" stroke-linejoin="round" stroke-linecap="round"/>
<path d="M1097.5,350.7 L1114.0,346.2 L1130.5,350.0 L1115.5,354.5 Z" fill="none" stroke="#000" stroke-width="1.9" stroke-linejoin="round"/>
<path d="M1115.5,347.0 L1122.2,348.1 L1117.4,352.6 L1109.9,350.4 Z" fill="#000"/>
<path d="M1118.5 335.0 L1115.5 347.0 M1120.8 336.2 L1114.4 348.1" fill="none" stroke="#000" stroke-width="1.5"/>
<path d="M1099.7 332.7 L1102.0 330.2 Q1114.0 329.2 1124.5 333.5 L1125.7 336.5" fill="none" stroke="#000" stroke-width="2.0" stroke-linejoin="round" stroke-linecap="round"/>
<path d="M1037.5 313.5 L1057 310.5 L1054.5 346 M1047 312 L1055.5 328" fill="none" stroke="#c0504d" stroke-width="1.2"/>
<path d="M1057 332.5 L1091 337.5 L1088.5 377 M1075 335 L1089 357 L1091 337.5" fill="none" stroke="#5b8fd9" stroke-width="1.2"/>
<path d="M1075 407.5 L1130 417.5 L1117 422" fill="none" stroke="#5fb27a" stroke-width="1.2"/>
<line x1="1000.5" y1="419" x2="1120" y2="443.5" stroke="#e0463e" stroke-width="1.6"/>
<polygon points="1117,439 1143,449 1118,450.5" fill="#e2504a"/>
<line x1="1000.5" y1="419" x2="1069" y2="396.5" stroke="#3f68a3" stroke-width="1.6"/>
<polygon points="1066,392 1083,389.5 1074,398 1068,398.5" fill="#4a74ae"/>
<line x1="1000.5" y1="419" x2="1005.5" y2="284" stroke="#5bd67a" stroke-width="1.6"/>
<polygon points="1001.5,284 1006.8,260 1010.5,284.5" fill="#5bd67a"/>
<circle cx="1007" cy="403.8" r="2.6" fill="#f4f4f4" stroke="#222" stroke-width="0.8"/>
<circle cx="1009.5" cy="416" r="2.6" fill="#f4f4f4" stroke="#222" stroke-width="0.8"/></svg>
<svg width="2000" height="1052" viewBox="0 0 2000 1052" style="pointer-events:none"><polygon points="1988,0 2000,0 2000,9" fill="#1b1b28"/>
<path d="M1745.6 18.2 l4.2 4.2 l4.2 -4.2" fill="none" stroke="#7a7a7a" stroke-width="1.6"/>
<path d="M1969.0 18.2 l4.2 4.2 l4.2 -4.2" fill="none" stroke="#7a7a7a" stroke-width="1.6"/>
<g fill="#6a6a6a"><rect x="1.5" y="41" width="1.2" height="1.2"/><rect x="1.5" y="44.1" width="1.2" height="1.2"/><rect x="1.5" y="47.2" width="1.2" height="1.2"/><rect x="1.5" y="50.3" width="1.2" height="1.2"/><rect x="1.5" y="53.4" width="1.2" height="1.2"/><rect x="1.5" y="56.5" width="1.2" height="1.2"/><rect x="1.5" y="59.6" width="1.2" height="1.2"/><rect x="1.5" y="62.7" width="1.2" height="1.2"/><rect x="1.5" y="65.8" width="1.2" height="1.2"/><rect x="1.5" y="68.9" width="1.2" height="1.2"/><rect x="1.5" y="72" width="1.2" height="1.2"/><rect x="4.7" y="41" width="1.2" height="1.2"/><rect x="4.7" y="44.1" width="1.2" height="1.2"/><rect x="4.7" y="47.2" width="1.2" height="1.2"/><rect x="4.7" y="50.3" width="1.2" height="1.2"/><rect x="4.7" y="53.4" width="1.2" height="1.2"/><rect x="4.7" y="56.5" width="1.2" height="1.2"/><rect x="4.7" y="59.6" width="1.2" height="1.2"/><rect x="4.7" y="62.7" width="1.2" height="1.2"/><rect x="4.7" y="65.8" width="1.2" height="1.2"/><rect x="4.7" y="68.9" width="1.2" height="1.2"/><rect x="4.7" y="72" width="1.2" height="1.2"/></g>
<g fill="#6a6a6a"><rect x="4" y="80.5" width="1.2" height="1.2"/><rect x="4" y="83.5" width="1.2" height="1.2"/><rect x="7" y="80.5" width="1.2" height="1.2"/><rect x="7" y="83.5" width="1.2" height="1.2"/><rect x="10" y="80.5" width="1.2" height="1.2"/><rect x="10" y="83.5" width="1.2" height="1.2"/><rect x="13" y="80.5" width="1.2" height="1.2"/><rect x="13" y="83.5" width="1.2" height="1.2"/><rect x="16" y="80.5" width="1.2" height="1.2"/><rect x="16" y="83.5" width="1.2" height="1.2"/><rect x="19" y="80.5" width="1.2" height="1.2"/><rect x="19" y="83.5" width="1.2" height="1.2"/><rect x="22" y="80.5" width="1.2" height="1.2"/><rect x="22" y="83.5" width="1.2" height="1.2"/><rect x="25" y="80.5" width="1.2" height="1.2"/><rect x="25" y="83.5" width="1.2" height="1.2"/><rect x="28" y="80.5" width="1.2" height="1.2"/><rect x="28" y="83.5" width="1.2" height="1.2"/><rect x="31" y="80.5" width="1.2" height="1.2"/><rect x="31" y="83.5" width="1.2" height="1.2"/><rect x="34" y="80.5" width="1.2" height="1.2"/><rect x="34" y="83.5" width="1.2" height="1.2"/></g>
<g transform="translate(10 37)"><path d="M8 20 C13 11.5 25 11.5 30 22" fill="none" stroke="#c4c4c4" stroke-width="2.6"/><path d="M6.5 11 l0 11 l11 0" fill="none" stroke="#c4c4c4" stroke-width="2.6"/></g>
<g transform="translate(49.5 37)"><path d="M9 22 C14 11.5 26 11.5 31 20" fill="none" stroke="#656565" stroke-width="2.4"/><path d="M32.5 11 l0 11 l-11 0" fill="none" stroke="#656565" stroke-width="2.4"/></g>
<g transform="translate(188.75 37)"><circle cx="19" cy="19" r="14.5" fill="none" stroke="#1a1205" stroke-width="4.2"/><circle cx="19" cy="19" r="14.5" fill="none" stroke="#f0a04b" stroke-width="2.6"/><path d="M12.5 11 l14.5 6.5 l-6.2 2 l5.2 6.2 l-2.4 2 l-5.2 -6.2 l-2.6 5.6 z" fill="#141414"/><path d="M37 37 l0 -5 l-5 5 z" fill="#8a8a8a"/></g>
<g transform="translate(231 37)"><path d="M17.1 17.1 L17.1 9.1 L14.4 9.1 L19.0 5.0 L23.6 9.1 L20.9 9.1 L20.9 17.1 L28.9 17.1 L28.9 14.4 L33.0 19.0 L28.9 23.6 L28.9 20.9 L20.9 20.9 L20.9 28.9 L23.6 28.9 L19.0 33.0 L14.4 28.9 L17.1 28.9 L17.1 20.9 L9.1 20.9 L9.1 23.6 L5.0 19.0 L9.1 14.4 L9.1 17.1Z" fill="#f0a04b" stroke="#1a1205" stroke-width="1" stroke-linejoin="round"/></g>
<g transform="translate(270.5 37)"><path d="M12.5 29 A12 12 0 0 1 20 7 l-1 4.6 A7.5 7.5 0 0 0 15.5 25 z" fill="#f0a04b" stroke="#1a1205" stroke-width="1" stroke-linejoin="round"/><path d="M25.5 9 A12 12 0 0 1 18 31 l1 -4.6 A7.5 7.5 0 0 0 22.5 13 z" fill="#f0a04b" stroke="#1a1205" stroke-width="1" stroke-linejoin="round"/><path d="M8.5 27 l8.5 -3 l-1.5 7.5 z" fill="#f0a04b" stroke="#1a1205" stroke-width="1"/><path d="M29.5 11 l-8.5 3 l1.5 -7.5 z" fill="#f0a04b" stroke="#1a1205" stroke-width="1"/></g>
<g transform="translate(310.5 37)"><rect x="7.5" y="7.5" width="23" height="23" rx="3" fill="#f0a04b" stroke="#1a1205" stroke-width="1.2"/><path d="M7.5 19.5 l11.5 0 l0 11" fill="none" stroke="#1a1205" stroke-width="1.2"/><path d="M19 19.5 L30 8" stroke="#1a1205" stroke-width="1.2" stroke-dasharray="2.5 1.8"/></g>
<g transform="translate(353.75 37)"><path d="M7.5 7 l0 12.5 l3.6 -3.8 l6 -0.4 z" fill="#a4a4a4"/><path d="M22.4 22.4 L22.4 16.9 L20.3 16.9 L23.5 14.0 L26.7 16.9 L24.6 16.9 L24.6 22.4 L30.1 22.4 L30.1 20.3 L33.0 23.5 L30.1 26.7 L30.1 24.6 L24.6 24.6 L24.6 30.1 L26.7 30.1 L23.5 33.0 L20.3 30.1 L22.4 30.1 L22.4 24.6 L16.9 24.6 L16.9 26.7 L14.0 23.5 L16.9 20.3 L16.9 22.4Z" fill="#a4a4a4" stroke="#a4a4a4" stroke-width="0.3" stroke-linejoin="round"/><path d="M37 37 l0 -5 l-5 5 z" fill="#a6ad66"/></g>
<g transform="translate(397 37)"><rect x="12.5" y="10.5" width="13" height="13" rx="3" fill="#de7f48"/><path d="M19 3.5 l3.6 4 l-7.2 0 z M19 30 l3.6 -4 l-7.2 0 z M4.5 17 l4 -3.6 l0 7.2 z M33 17 l-4 -3.6 l0 7.2 z" fill="#de7f48"/><circle cx="27" cy="26.5" r="5.6" fill="none" stroke="#1c1c1c" stroke-width="4.6"/><circle cx="27" cy="26.5" r="5.6" fill="none" stroke="#f2f2f2" stroke-width="2.6" stroke-dasharray="27 8.2" transform="rotate(-60 27 26.5)"/><path d="M26 17.5 l6 2.2 l-5.2 3.4 z" fill="#f2f2f2" stroke="#1c1c1c" stroke-width="0.6"/></g>
<g transform="translate(447.25 37)"><path d="M17.2 17.2 L17.2 9.5 L14.6 9.5 L19.0 5.5 L23.4 9.5 L20.8 9.5 L20.8 17.2 L28.5 17.2 L28.5 14.6 L32.5 19.0 L28.5 23.4 L28.5 20.8 L20.8 20.8 L20.8 28.5 L23.4 28.5 L19.0 32.5 L14.6 28.5 L17.2 28.5 L17.2 20.8 L9.5 20.8 L9.5 23.4 L5.5 19.0 L9.5 14.6 L9.5 17.2Z" fill="#f0a04b" stroke="#1a1205" stroke-width="1" stroke-linejoin="round"/><path d="M37 37 l0 -5 l-5 5 z" fill="#8a8a8a"/></g>
<g transform="translate(499 37)"><text x="6" y="22" font-family="Liberation Sans,sans-serif" font-size="20" fill="#cfcfcf">X</text><path d="M24 16.500 l0 8.500 l8.500 7.500 M24 25 l-5 4.500" fill="none" stroke="#8c8c8c" stroke-width="1.6"/><path d="M24 25 l8.500 7.500" stroke="#e05a5a" stroke-width="1.8"/></g>
<g transform="translate(538.5 37)"><text x="6" y="22" font-family="Liberation Sans,sans-serif" font-size="20" fill="#cfcfcf">Y</text><path d="M24 16.500 l0 8.500 l8.500 7.500 M24 25 l-5 4.500" fill="none" stroke="#8c8c8c" stroke-width="1.6"/><path d="M24 16.500 l0 8.500" stroke="#5fd080" stroke-width="1.8"/></g>
<g transform="translate(579 37)"><text x="7" y="22" font-family="Liberation Sans,sans-serif" font-size="20" fill="#cfcfcf">Z</text><rect x="21.5" y="22.5" width="11" height="9" rx="1.5" fill="#fff"/><path d="M24 23 l0 -3 a3 3 0 0 1 6 0 l0 3" fill="none" stroke="#fff" stroke-width="1.8"/></g>
<g transform="translate(619 37)"><path d="M9 9 l0 23 l22 0" fill="none" stroke="#0e0e0e" stroke-width="2.6"/><path d="M9 4.5 l3.8 6 l-7.6 0 z M35 32 l-6 3.8 l0 -7.6 z" fill="#0e0e0e"/><circle cx="24.5" cy="14" r="9" fill="#f0a04b" stroke="#1a1205" stroke-width="1"/><path d="M15.5 14 l18 0 M24.5 5 l0 18 M18 8 q6.5 4 13 0 M18 20 q6.5 -4 13 0 M24.5 5 q-7 9 0 18 M24.5 5 q7 9 0 18" fill="none" stroke="#1a1205" stroke-width="0.9"/></g>
<g transform="translate(757.75 37)"><rect x="6.5" y="8.5" width="26" height="4" fill="#a9a9a9"/><rect x="9" y="15" width="21" height="15.5" fill="#a9a9a9"/><path d="M14 26 a3 3 0 0 1 1 -5.6 a4.6 4.6 0 0 1 8.6 0.4 a2.8 2.8 0 0 1 1 5.2 z" fill="#e8f389"/></g>
<g transform="translate(809.25 37)"><path d="M9.5 9 l0 22.5 l21 0" fill="none" stroke="#111" stroke-width="4.2"/><path d="M9.5 4 l4.4 6.4 l-8.8 0 z M35 31.5 l-6.4 4.4 l0 -8.8 z" fill="#111"/><path d="M9.5 9 l0 22.5 l21 0" fill="none" stroke="#f4f4f4" stroke-width="2.4"/><path d="M9.5 5.2 l3 5 l-6 0 z M33.6 31.5 l-5 3 l0 -6 z" fill="#f4f4f4"/><circle cx="24" cy="13.5" r="8.4" fill="#b8d6fb" stroke="#111" stroke-width="1.2"/></g>
<g transform="translate(848.75 37)"><path d="M19 6.5625 l12.5 6.875 l-12.5 6.875 l-12.5 -6.875 z" fill="#a8d2fa" stroke="#10243a" stroke-width="1.1" stroke-linejoin="round"/><path d="M6.5 13.4375 l12.5 6.875 l0 13.125 l-12.5 -6.875 z" fill="#7fb4ec" stroke="#10243a" stroke-width="1.1" stroke-linejoin="round"/><path d="M19 20.3125 l12.5 -6.875 l0 13.125 l-12.5 6.875 z" fill="#5e94d4" stroke="#10243a" stroke-width="1.1" stroke-linejoin="round"/><path d="M37 37 l0 -5 l-5 5 z" fill="#8a8a8a"/></g>
<g transform="translate(888.5 37)"><path d="M5 24 q14 11 30 0" fill="none" stroke="#111" stroke-width="4.6" stroke-linecap="round"/><path d="M5 24 q14 11 30 0" fill="none" stroke="#f1f1f1" stroke-width="2.6" stroke-linecap="round"/><path d="M22 3 l13 0 l-8 10.5 l-7 -5 z" fill="#111"/><path d="M20 8.5 l7 5 l-6 7.5 l-11 3 l3.5 -10.5 z" fill="#f0a04b" stroke="#1a1205" stroke-width="1"/><path d="M10.5 23.5 l8 -8" stroke="#1a1205" stroke-width="1"/><circle cx="18.6" cy="15.6" r="1.3" fill="#1a1205"/><circle cx="20" cy="32.5" r="2.9" fill="#f0a04b" stroke="#1a1205" stroke-width="1"/><path d="M37 37 l0 -5 l-5 5 z" fill="#8a8a8a"/></g>
<g transform="translate(929 37)"><path d="M8 9 l17 -4.5 l9 5 l-1 18 l-17 5.5 l-8 -6 z M8 9 l9 6 l16 -5.5 M17 15 l-1 18" fill="none" stroke="#1b1b1b" stroke-width="1.6"/><path d="M12 14 q0 -3 4 -4 l11 -2.6 q4 -0.6 4 3 l-0.6 13 q0 3 -4 4.4 l-9 3 q-4.6 1 -5 -3 z" fill="#72e39a" stroke="#17341f" stroke-width="1"/><path d="M12.5 13.5 l8 4 l10 -3.6 M20.5 17.5 l-0.8 13" fill="none" stroke="#17341f" stroke-width="1"/><path d="M13 13.6 l7.4 3.8" stroke="#fff" stroke-width="1.2"/><circle cx="8" cy="9" r="1.6" fill="#fff"/><circle cx="25" cy="4.5" r="1.6" fill="#fff"/><circle cx="34" cy="9.5" r="1.6" fill="#fff"/><circle cx="33" cy="27.5" r="1.6" fill="#fff"/><circle cx="16" cy="33" r="1.6" fill="#fff"/><circle cx="8" cy="27" r="1.6" fill="#fff"/><path d="M37 37 l0 -5 l-5 5 z" fill="#6a6a6a"/></g>
<g transform="translate(969.5 37)"><path d="M8 12 l15 -6 l10 4.5 l0 19 l-15 5 l-10 -5 z" fill="#72e39a" stroke="#17341f" stroke-width="1"/><path d="M8 12 l10 4.5 l0 18 l-10 -5 z" fill="#f4fff6" stroke="#17341f" stroke-width="1"/><path d="M18 16.5 l15 -6 l0 19 l-15 5 z" fill="#5ed389" stroke="#17341f" stroke-width="1"/><path d="M10 15 l6.5 3 l0 13 l-6.5 -3 z" fill="#58c883" stroke="#17341f" stroke-width="0.8"/><path d="M8 12 l15 -6 l10 4.5 l-15 6 z" fill="#8cf0ae" stroke="#17341f" stroke-width="1"/><rect x="22" y="17" width="6" height="3" fill="#1d1d1d" transform="skewY(-20) translate(0 9)"/><path d="M37 37 l0 -5 l-5 5 z" fill="#8a8a8a"/></g>
<g transform="translate(1009.5 37)"><path d="M19 8.75 l10 5.5 l-10 5.5 l-10 -5.5 z" fill="#f0f0f0" stroke="#222" stroke-width="1" stroke-linejoin="round"/><path d="M9 14.25 l10 5.5 l0 10.5 l-10 -5.5 z" fill="#d5d5d5" stroke="#222" stroke-width="1" stroke-linejoin="round"/><path d="M19 19.75 l10 -5.5 l0 10.5 l-10 5.5 z" fill="#b9b9b9" stroke="#222" stroke-width="1" stroke-linejoin="round"/><circle cx="19" cy="5" r="2.9" fill="#72e39a" stroke="#17341f" stroke-width="0.9"/><circle cx="8" cy="10.5" r="2.9" fill="#72e39a" stroke="#17341f" stroke-width="0.9"/><circle cx="30" cy="10.5" r="2.9" fill="#72e39a" stroke="#17341f" stroke-width="0.9"/><circle cx="19" cy="16.5" r="2.9" fill="#72e39a" stroke="#17341f" stroke-width="0.9"/><circle cx="8" cy="22.5" r="2.9" fill="#72e39a" stroke="#17341f" stroke-width="0.9"/><circle cx="30" cy="22.5" r="2.9" fill="#72e39a" stroke="#17341f" stroke-width="0.9"/><circle cx="19" cy="29" r="2.9" fill="#72e39a" stroke="#17341f" stroke-width="0.9"/><circle cx="19" cy="34" r="2.9" fill="#72e39a" stroke="#17341f" stroke-width="0.9"/><path d="M37 37 l0 -5 l-5 5 z" fill="#8a8a8a"/></g>
<g transform="translate(1049.5 37)"><path d="M19 3.975 l7 3.85 l-7 3.85 l-7 -3.85 z" fill="#8cf0ae" stroke="#17341f" stroke-width="1" stroke-linejoin="round"/><path d="M12 7.825 l7 3.85 l0 7.35 l-7 -3.85 z" fill="#72e39a" stroke="#17341f" stroke-width="1" stroke-linejoin="round"/><path d="M19 11.675 l7 -3.85 l0 7.35 l-7 3.85 z" fill="#5ed389" stroke="#17341f" stroke-width="1" stroke-linejoin="round"/><path d="M11.5 16.475 l7 3.85 l-7 3.85 l-7 -3.85 z" fill="#8cf0ae" stroke="#17341f" stroke-width="1" stroke-linejoin="round"/><path d="M4.5 20.325 l7 3.85 l0 7.35 l-7 -3.85 z" fill="#72e39a" stroke="#17341f" stroke-width="1" stroke-linejoin="round"/><path d="M11.5 24.175 l7 -3.85 l0 7.35 l-7 3.85 z" fill="#5ed389" stroke="#17341f" stroke-width="1" stroke-linejoin="round"/><path d="M26.5 16.475 l7 3.85 l-7 3.85 l-7 -3.85 z" fill="#8cf0ae" stroke="#17341f" stroke-width="1" stroke-linejoin="round"/><path d="M19.5 20.325 l7 3.85 l0 7.35 l-7 -3.85 z" fill="#72e39a" stroke="#17341f" stroke-width="1" stroke-linejoin="round"/><path d="M26.5 24.175 l7 -3.85 l0 7.35 l-7 3.85 z" fill="#5ed389" stroke="#17341f" stroke-width="1" stroke-linejoin="round"/><path d="M37 37 l0 -5 l-5 5 z" fill="#8a8a8a"/></g>
<g transform="translate(1089.5 37)"><rect x="6" y="5" width="4.6" height="28" rx="1" fill="#c77ae6" stroke="#2a1035" stroke-width="1"/><rect x="27.5" y="5" width="4.6" height="28" rx="1" fill="#c77ae6" stroke="#2a1035" stroke-width="1"/><path d="M11.5 17 l8.5 0 l0 -4 l7 6 l-7 6 l0 -4 l-8.5 0 z" fill="#f2f2f2" stroke="#222" stroke-width="0.9"/><path d="M37 37 l0 -5 l-5 5 z" fill="#8a8a8a"/></g>
<g transform="translate(1129.75 37)"><path d="M9 12 q6 -7 12 -3.5 q9 6 11 20 l-8.5 3.5 q-5 -13 -14.5 -20 z" fill="#8e96d8" stroke="#1d2146" stroke-width="1"/><path d="M9 12 q6 -7 12 -3.5 l-5 4.4 q-3 -2 -7 -0.9z" fill="#b4baee" stroke="#1d2146" stroke-width="0.8"/><path d="M37 37 l0 -5 l-5 5 z" fill="#8a8a8a"/></g>
<g transform="translate(1171 37)"><rect x="2.5" y="9.500" width="35" height="27" fill="#a9cbf8"/><rect x="2.5" y="9.500" width="35" height="6" fill="#cfe3fd"/><path d="M2.500 15.500 h35 M2.500 24 h35 M2.500 9.500 h35 M12 9.500 L2.500 30 M17 9.500 L14 36.500 M23 9.500 L26 36.500 M28 9.500 L37.500 30 M8 15.500 L2.500 21 M32 15.500 L37.500 21" stroke="#f4f8ff" stroke-width="1.200" fill="none"/><path d="M37 37 l0 -5 l-5 5 z" fill="#8a8a8a"/></g>
<g transform="translate(1211.75 37)"><rect x="6" y="20" width="20" height="12.5" rx="2" fill="#0e0e0e"/><path d="M26 24.5 l8.5 -4 l0 12 l-8.5 -4 z" fill="#0e0e0e"/><circle cx="11" cy="13.5" r="5.4" fill="#f2f2f2" stroke="#0e0e0e" stroke-width="2"/><circle cx="23.5" cy="11.5" r="6.4" fill="#f2f2f2" stroke="#0e0e0e" stroke-width="2"/><circle cx="11" cy="13.5" r="2" fill="#7fb4ec" stroke="#0e0e0e" stroke-width="0.9"/><circle cx="23.5" cy="11.5" r="2.4" fill="#7fb4ec" stroke="#0e0e0e" stroke-width="0.9"/><rect x="9.5" y="25.5" width="5" height="3.6" rx="1" fill="#f2f2f2"/><path d="M37 37 l0 -5 l-5 5 z" fill="#8a8a8a"/></g>
<g transform="translate(1252 37)"><circle cx="19" cy="14.5" r="12.5" fill="#fff" opacity="0.12"/><path d="M19 4 a9.4 9.4 0 0 1 6 16.6 q-1.6 1.8 -1.6 4.6 l-8.8 0 q0 -2.8 -1.6 -4.6 a9.4 9.4 0 0 1 6 -16.6 z" fill="#fbfbfb" stroke="#3a3a3a" stroke-width="0.9"/><rect x="14.8" y="26" width="8.4" height="2.2" fill="#e0e0e0" stroke="#333" stroke-width="0.6"/><rect x="15.3" y="28.8" width="7.4" height="2" fill="#e0e0e0" stroke="#333" stroke-width="0.6"/><path d="M16.5 31.4 l5 0 l-1.2 2.2 l-2.6 0 z" fill="#ccc" stroke="#333" stroke-width="0.6"/><path d="M37 37 l0 -5 l-5 5 z" fill="#8a8a8a"/></g>
<g transform="translate(1390.25 37)"><rect x="4" y="11" width="30" height="21" rx="3" fill="#0d0d0d"/><path d="M4 11 l3 -6 l27 0 l0 6 z" fill="#0d0d0d"/><path d="M8 5.5 l3.4 0 l2.6 5.5 l-3.4 0 z" fill="#e8753a"/><path d="M14.2 5.5 l3.4 0 l2.6 5.5 l-3.4 0 z" fill="#e8753a"/><path d="M20.4 5.5 l3.4 0 l2.6 5.5 l-3.4 0 z" fill="#e8753a"/><path d="M26.6 5.5 l3.4 0 l2.6 5.5 l-3.4 0 z" fill="#e8753a"/></g>
<g transform="translate(1430 37)"><rect x="4" y="11" width="30" height="21" rx="3" fill="#0d0d0d"/><path d="M4 11 l3 -6 l27 0 l0 6 z" fill="#0d0d0d"/><path d="M8 5.5 l3.4 0 l2.6 5.5 l-3.4 0 z" fill="#e8753a"/><path d="M14.2 5.5 l3.4 0 l2.6 5.5 l-3.4 0 z" fill="#e8753a"/><path d="M20.4 5.5 l3.4 0 l2.6 5.5 l-3.4 0 z" fill="#e8753a"/><path d="M26.6 5.5 l3.4 0 l2.6 5.5 l-3.4 0 z" fill="#e8753a"/><path d="M14.5 15 l0 13 l11 -6.5 z" fill="#fff"/><path d="M37 37 l0 -4.5 l-4.5 4.5 z" fill="#8a8a8a"/></g>
<g transform="translate(1470 37)"><rect x="4" y="11" width="30" height="21" rx="3" fill="#0d0d0d"/><path d="M4 11 l3 -6 l27 0 l0 6 z" fill="#0d0d0d"/><path d="M8 5.5 l3.4 0 l2.6 5.5 l-3.4 0 z" fill="#e8753a"/><path d="M14.2 5.5 l3.4 0 l2.6 5.5 l-3.4 0 z" fill="#e8753a"/><path d="M20.4 5.5 l3.4 0 l2.6 5.5 l-3.4 0 z" fill="#e8753a"/><path d="M26.6 5.5 l3.4 0 l2.6 5.5 l-3.4 0 z" fill="#e8753a"/><circle cx="19.5" cy="21.5" r="4.34" fill="none" stroke="#fff" stroke-width="3.64"/><rect x="18.1" y="14.15" width="2.8" height="2.94" fill="#fff" transform="rotate(0 19.5 21.5)"/><rect x="18.1" y="14.15" width="2.8" height="2.94" fill="#fff" transform="rotate(45 19.5 21.5)"/><rect x="18.1" y="14.15" width="2.8" height="2.94" fill="#fff" transform="rotate(90 19.5 21.5)"/><rect x="18.1" y="14.15" width="2.8" height="2.94" fill="#fff" transform="rotate(135 19.5 21.5)"/><rect x="18.1" y="14.15" width="2.8" height="2.94" fill="#fff" transform="rotate(180 19.5 21.5)"/><rect x="18.1" y="14.15" width="2.8" height="2.94" fill="#fff" transform="rotate(225 19.5 21.5)"/><rect x="18.1" y="14.15" width="2.8" height="2.94" fill="#fff" transform="rotate(270 19.5 21.5)"/><rect x="18.1" y="14.15" width="2.8" height="2.94" fill="#fff" transform="rotate(315 19.5 21.5)"/></g>
<g transform="translate(1.3 88.75)"><path d="M13 3.3625 l8.5 4.675 l-8.5 4.675 l-8.5 -4.675 z" fill="#fbfbfb" stroke="#101010" stroke-width="1" stroke-linejoin="round"/><path d="M4.5 8.0375 l8.5 4.675 l0 8.925 l-8.5 -4.675 z" fill="#e6e6e6" stroke="#101010" stroke-width="1" stroke-linejoin="round"/><path d="M13 12.7125 l8.5 -4.675 l0 8.925 l-8.5 4.675 z" fill="#c9c9c9" stroke="#101010" stroke-width="1" stroke-linejoin="round"/><path d="M25.5 15.3625 l8.5 4.675 l-8.5 4.675 l-8.5 -4.675 z" fill="#e8753a" stroke="#101010" stroke-width="1" stroke-linejoin="round"/><path d="M17 20.0375 l8.5 4.675 l0 8.925 l-8.5 -4.675 z" fill="#777" stroke="#101010" stroke-width="1" stroke-linejoin="round"/><path d="M25.5 24.7125 l8.5 -4.675 l0 8.925 l-8.5 4.675 z" fill="#595959" stroke="#101010" stroke-width="1" stroke-linejoin="round"/><path d="M8.5 16 l5 0 l0 11 l3.5 0 l-6 8 l-6 -8 l3.5 0 z" fill="#fbfbfb" stroke="#101010" stroke-width="1"/><path d="M37 37 l0 -5 l-5 5 z" fill="#8a8a8a"/></g>
<g transform="translate(1.3 140.25)"><path d="M19 3.5 l14.5 5.4 l0 20.2 l-14.5 5.4 l-14.5 -5.4 l0 -20.2 z" fill="none" stroke="#101010" stroke-width="3.6" stroke-linejoin="round"/><path d="M19 3.500 l14.5 5.4 l0 20.2 l-14.5 5.4 l-14.5 -5.4 l0 -20.2 z" fill="none" stroke="#f0a04b" stroke-width="2" stroke-linejoin="round"/><path d="M19 6.16 l12 4.32 l-12 4.32 l-12 -4.32 z" fill="#8d8d8d" stroke="#101010" stroke-width="1.1" stroke-linejoin="round"/><path d="M7 10.48 l12 4.32 l0 17.04 l-12 -4.32 z" fill="#6f6f6f" stroke="#101010" stroke-width="1.1" stroke-linejoin="round"/><path d="M19 14.8 l12 -4.32 l0 17.04 l-12 4.32 z" fill="#545454" stroke="#101010" stroke-width="1.1" stroke-linejoin="round"/><path d="M37 37 l0 -5 l-5 5 z" fill="#93a7cc"/></g>
<g transform="translate(1.3 180.75)"><path d="M18 6.125 l12.5 4.5 l-12.5 4.5 l-12.5 -4.5 z" fill="#8d8d8d" stroke="#101010" stroke-width="1.1" stroke-linejoin="round"/><path d="M5.5 10.625 l12.5 4.5 l0 17.75 l-12.5 -4.5 z" fill="#6f6f6f" stroke="#101010" stroke-width="1.1" stroke-linejoin="round"/><path d="M18 15.125 l12.5 -4.5 l0 17.75 l-12.5 4.5 z" fill="#545454" stroke="#101010" stroke-width="1.1" stroke-linejoin="round"/><path d="M19 16.500 l13 -4.600 l0 17.200 l-13 5 z" fill="#fff" stroke="#f0a04b" stroke-width="1.6" stroke-linejoin="round"/><path d="M19.5 17 l4 -2.1 l0 4.6 l-4 2.2 z" fill="#111"/><path d="M27.8 14 l4 -2.1 l0 4.6 l-4 2.2 z" fill="#111"/><path d="M23.6 21.3 l4 -2.1 l0 4.6 l-4 2.2 z" fill="#111"/><path d="M19.5 27.6 l4 -2.1 l0 4.6 l-4 2.2 z" fill="#111"/><path d="M27.8 24.6 l4 -2.1 l0 4.6 l-4 2.2 z" fill="#111"/></g>
<g transform="translate(1.3 223)"><path d="M18 7.125 l12.5 4.5 l-12.5 4.5 l-12.5 -4.5 z" fill="#8d8d8d" stroke="#101010" stroke-width="1.1" stroke-linejoin="round"/><path d="M5.5 11.625 l12.5 4.5 l0 17.75 l-12.5 -4.5 z" fill="#6f6f6f" stroke="#101010" stroke-width="1.1" stroke-linejoin="round"/><path d="M18 16.125 l12.5 -4.5 l0 17.75 l-12.5 4.5 z" fill="#545454" stroke="#101010" stroke-width="1.1" stroke-linejoin="round"/><circle cx="17.5" cy="16" r="3" fill="#f0a04b" stroke="#101010" stroke-width="1"/><circle cx="31.5" cy="10.500" r="3" fill="#f0a04b" stroke="#101010" stroke-width="1"/></g>
<g transform="translate(1.3 262.5)"><path d="M19 7.625 l12.5 4.5 l-12.5 4.5 l-12.5 -4.5 z" fill="#8d8d8d" stroke="#101010" stroke-width="1.1" stroke-linejoin="round"/><path d="M6.5 12.125 l12.5 4.5 l0 17.75 l-12.5 -4.5 z" fill="#6f6f6f" stroke="#101010" stroke-width="1.1" stroke-linejoin="round"/><path d="M19 16.625 l12.5 -4.5 l0 17.75 l-12.5 4.5 z" fill="#545454" stroke="#101010" stroke-width="1.1" stroke-linejoin="round"/><path d="M6.500 10.500 l13 -4.500 M19.500 19.500 l12.500 -4.500" stroke="#101010" stroke-width="4"/><path d="M6.500 10.500 l13 -4.500 M19.500 19.500 l12.500 -4.500" stroke="#f0a04b" stroke-width="2.2"/></g>
<g transform="translate(1.3 302.75)"><path d="M19 6.625 l12.5 4.5 l-12.5 4.5 l-12.5 -4.5 z" fill="#f0a04b" stroke="#101010" stroke-width="1.1" stroke-linejoin="round"/><path d="M6.5 11.125 l12.5 4.5 l0 17.75 l-12.5 -4.5 z" fill="#6f6f6f" stroke="#101010" stroke-width="1.1" stroke-linejoin="round"/><path d="M19 15.625 l12.5 -4.5 l0 17.75 l-12.5 4.5 z" fill="#545454" stroke="#101010" stroke-width="1.1" stroke-linejoin="round"/></g>
<g transform="translate(1.3 345.5)"><rect x="6" y="6" width="26" height="26" rx="2" fill="#555" /><rect x="7.5" y="7.5" width="13" height="13" fill="#80604a"/><rect x="22" y="8.5" width="8.5" height="10.5" fill="#606060"/><rect x="8.5" y="22.5" width="10.5" height="8" fill="#606060"/><rect x="21.5" y="22.5" width="9" height="8" fill="#606060"/></g>
<g transform="translate(1.3 387.75)"><path d="M9.5 8 l0 21.5 l20 0" fill="none" stroke="#101010" stroke-width="4.2"/><path d="M9.5 3.5 l4.4 6.4 l-8.8 0 z M34 29.5 l-6.4 4.4 l0 -8.8 z" fill="#101010"/><path d="M9.5 8 l0 21.5 l20 0" fill="none" stroke="#f0a04b" stroke-width="2.4"/><path d="M9.5 5 l3 4.6 l-6 0 z M32.6 29.5 l-4.6 3 l0 -6 z" fill="#f0a04b"/></g>
<g transform="translate(1.3 439.4)"><path d="M19 8 l16.5 10.5 l-16.5 10.5 l-16.5 -10.5 z" fill="#f0a04b" stroke="#1a1205" stroke-width="1.2" stroke-linejoin="round"/><path d="M14.875 10.625 l16.5 10.5 M23.125 10.625 l-16.5 10.5" stroke="#1a1205" stroke-width="1.1" fill="none"/><path d="M10.75 13.25 l16.5 10.5 M27.25 13.25 l-16.5 10.5" stroke="#1a1205" stroke-width="1.1" fill="none"/><path d="M6.625 15.875 l16.5 10.5 M31.375 15.875 l-16.5 10.5" stroke="#1a1205" stroke-width="1.1" fill="none"/></g>
<g transform="translate(1.3 479.3)"><path d="M19 3.5 l16.5 10.5 l-16.5 10.5 l-16.5 -10.5 z" fill="none" stroke="#101010" stroke-width="1.2" stroke-linejoin="round"/><path d="M14.875 6.125 l16.5 10.5 M23.125 6.125 l-16.5 10.5" stroke="#101010" stroke-width="1.1" fill="none"/><path d="M10.75 8.75 l16.5 10.5 M27.25 8.75 l-16.5 10.5" stroke="#101010" stroke-width="1.1" fill="none"/><path d="M6.625 11.375 l16.5 10.5 M31.375 11.375 l-16.5 10.5" stroke="#101010" stroke-width="1.1" fill="none"/><rect x="3.5" y="25" width="11.5" height="10" rx="1" fill="#101010"/><path d="M6 25 l0 -3 a3.3 3.3 0 0 1 6.6 0 l0 3" fill="none" stroke="#101010" stroke-width="1.8"/><circle cx="9.3" cy="30" r="1.4" fill="#5a78aa"/><path d="M37 37 l0 -5 l-5 5 z" fill="#93a7cc"/></g>
<g transform="translate(1.3 531)"><path d="M7.5 15.5 l6 -5.5 l9.5 10.5 a3.2 3.2 0 0 0 4.8 -4.2 l-9.5 -10.5 l6 -5.5 z" fill="none"/><path d="M6.5 17 l5.5 -5 l10 9 a3.4 3.4 0 0 0 4.6 -5 l-9.5 -8.6 l5.5 -5 l9.8 9 a11 11 0 0 1 -14.8 16.2 z" transform="translate(0 4)" fill="#f0a04b" stroke="#101010" stroke-width="1.2" stroke-linejoin="round"/><path d="M6.5 21 l5.5 -5 l3.6 3.2 l-5.5 5 z M17.2 11.4 l5.5 -5 l3.6 3.2 l-5.5 5 z" fill="#101010"/><path d="M37 37 l0 -5 l-5 5 z" fill="#8a8a8a"/></g>
<g transform="translate(1.3 583)"><circle cx="19" cy="19.5" r="14" fill="#f0a04b" stroke="#1a1205" stroke-width="1.2"/><path d="M19 5.5 q-6 14 0 28 M5 19.5 q14 -5 28 0 M8 10 q11 6 22 0" fill="none" stroke="#9a5a1a" stroke-width="0.9"/><text x="19" y="27" text-anchor="middle" font-family="Liberation Sans,sans-serif" font-weight="bold" font-size="22" fill="#16100a">S</text><path d="M37 37 l0 -5 l-5 5 z" fill="#a6ad66"/></g>
<path d="M51.5 88.5 h15.5 M51.5 93 h15.5 M51.5 97.5 h15.5" stroke="#8f8f8f" stroke-width="2"/>
<g fill="#8c8c8c" stroke="none"><path d="M1428 84.300 l4.600 5.200 h-2.800 v1.700 h1.700 v-2.800 l5.200 4.600 l-5.200 4.600 v-2.800 h-1.700 v1.700 h2.800 l-4.600 5.200 l-4.600 -5.200 h2.800 v-1.700 h-1.700 v2.800 l-5.200 -4.600 l5.200 -4.600 v2.800 h1.700 v-1.700 h-2.800 z"/><path d="M1450 84.500 l4.200 5 h-2.900 v5.500 h-2.600 v-5.500 h-2.900 z"/><path d="M1443 95.200 h14 l-7 6.300 z M1446.300 96.500 l3.700 3.300 l3.700 -3.300 z" fill-rule="evenodd"/></g><g fill="none" stroke="#8c8c8c" stroke-width="1.700"><path d="M1469.500 99 a7.500 7.500 0 0 1 1 -13 M1476.500 87 a7.500 7.500 0 0 1 -1 13"/><path d="M1473.500 84.300 l4.600 1.600 l-3.600 3.600 z M1472.500 101.700 l-4.600 -1.600 l3.600 -3.600 z" fill="#8c8c8c" stroke="none"/><rect x="1488.500" y="85.500" width="14.500" height="15"/><path d="M1488.500 93.500 h7 v7"/></g>
<rect x="45" y="105" width="1461" height="23" fill="#000" opacity="0.145"/>
<rect x="45" y="947.5" width="1461" height="23.5" fill="#000" opacity="0.21"/><path d="M1505.500 105 V970.500 H45" fill="none" stroke="#8e8e8e" stroke-width="1" opacity="0.7"/>
<rect x="48" y="108" width="28.6" height="17" rx="3" fill="#4f4f4f" opacity="0.92"/>
<rect x="744.5" y="108.3" width="58.5" height="17" rx="3" fill="#4f4f4f" opacity="0.92"/>
<g transform="translate(784.5 109.5) scale(0.42)"><rect x="6" y="20" width="20" height="12.5" rx="2" fill="#0e0e0e"/><path d="M26 24.5 l8.5 -4 l0 12 l-8.5 -4 z" fill="#0e0e0e"/><circle cx="11" cy="13.5" r="5.4" fill="#f2f2f2" stroke="#0e0e0e" stroke-width="2"/><circle cx="23.5" cy="11.5" r="6.4" fill="#f2f2f2" stroke="#0e0e0e" stroke-width="2"/><circle cx="11" cy="13.5" r="2.2" fill="#7fb4ec"/><circle cx="23.5" cy="11.5" r="2.6" fill="#7fb4ec"/><rect x="9.5" y="25.5" width="5" height="3.6" rx="1" fill="#f2f2f2"/></g>
<rect x="1355.7" y="948.6" width="145.7" height="17" rx="3" fill="#4a4a4a" opacity="0.92"/>
<path d="M1466 125.5 V144.5" stroke="#5fd67f" stroke-width="1.3"/><path d="M1466 144.5 L1480 138.7" stroke="#5b8fd9" stroke-width="1.2"/><path d="M1466 144.5 L1482.5 148.7" stroke="#d05656" stroke-width="1.2"/>
<g fill="#6a6a6a"><rect x="45.5" y="979" width="1.2" height="1.2"/><rect x="45.5" y="982" width="1.2" height="1.2"/><rect x="45.5" y="985" width="1.2" height="1.2"/><rect x="45.5" y="988" width="1.2" height="1.2"/><rect x="45.5" y="991" width="1.2" height="1.2"/><rect x="45.5" y="994" width="1.2" height="1.2"/><rect x="48.5" y="979" width="1.2" height="1.2"/><rect x="48.5" y="982" width="1.2" height="1.2"/><rect x="48.5" y="985" width="1.2" height="1.2"/><rect x="48.5" y="988" width="1.2" height="1.2"/><rect x="48.5" y="991" width="1.2" height="1.2"/><rect x="48.5" y="994" width="1.2" height="1.2"/><rect x="45.5" y="1006" width="1.2" height="1.2"/><rect x="45.5" y="1009" width="1.2" height="1.2"/><rect x="45.5" y="1012" width="1.2" height="1.2"/><rect x="45.5" y="1015" width="1.2" height="1.2"/><rect x="45.5" y="1018" width="1.2" height="1.2"/><rect x="45.5" y="1021" width="1.2" height="1.2"/><rect x="45.5" y="1024" width="1.2" height="1.2"/><rect x="45.5" y="1027" width="1.2" height="1.2"/><rect x="45.5" y="1030" width="1.2" height="1.2"/><rect x="45.5" y="1033" width="1.2" height="1.2"/><rect x="45.5" y="1036" width="1.2" height="1.2"/><rect x="48.5" y="1006" width="1.2" height="1.2"/><rect x="48.5" y="1009" width="1.2" height="1.2"/><rect x="48.5" y="1012" width="1.2" height="1.2"/><rect x="48.5" y="1015" width="1.2" height="1.2"/><rect x="48.5" y="1018" width="1.2" height="1.2"/><rect x="48.5" y="1021" width="1.2" height="1.2"/><rect x="48.5" y="1024" width="1.2" height="1.2"/><rect x="48.5" y="1027" width="1.2" height="1.2"/><rect x="48.5" y="1030" width="1.2" height="1.2"/><rect x="48.5" y="1033" width="1.2" height="1.2"/><rect x="48.5" y="1036" width="1.2" height="1.2"/></g>
<circle cx="577.5" cy="986.6" r="3.6" fill="none" stroke="#3b3b3b" stroke-width="3"/><rect x="576.3" y="980.3" width="2.4" height="2.52" fill="#3b3b3b" transform="rotate(0 577.5 986.6)"/><rect x="576.3" y="980.3" width="2.4" height="2.52" fill="#3b3b3b" transform="rotate(45 577.5 986.6)"/><rect x="576.3" y="980.3" width="2.4" height="2.52" fill="#3b3b3b" transform="rotate(90 577.5 986.6)"/><rect x="576.3" y="980.3" width="2.4" height="2.52" fill="#3b3b3b" transform="rotate(135 577.5 986.6)"/><rect x="576.3" y="980.3" width="2.4" height="2.52" fill="#3b3b3b" transform="rotate(180 577.5 986.6)"/><rect x="576.3" y="980.3" width="2.4" height="2.52" fill="#3b3b3b" transform="rotate(225 577.5 986.6)"/><rect x="576.3" y="980.3" width="2.4" height="2.52" fill="#3b3b3b" transform="rotate(270 577.5 986.6)"/><rect x="576.3" y="980.3" width="2.4" height="2.52" fill="#3b3b3b" transform="rotate(315 577.5 986.6)"/>
<circle cx="932.5" cy="986.6" r="3.6" fill="none" stroke="#3b3b3b" stroke-width="3"/><rect x="931.3" y="980.3" width="2.4" height="2.52" fill="#3b3b3b" transform="rotate(0 932.5 986.6)"/><rect x="931.3" y="980.3" width="2.4" height="2.52" fill="#3b3b3b" transform="rotate(45 932.5 986.6)"/><rect x="931.3" y="980.3" width="2.4" height="2.52" fill="#3b3b3b" transform="rotate(90 932.5 986.6)"/><rect x="931.3" y="980.3" width="2.4" height="2.52" fill="#3b3b3b" transform="rotate(135 932.5 986.6)"/><rect x="931.3" y="980.3" width="2.4" height="2.52" fill="#3b3b3b" transform="rotate(180 932.5 986.6)"/><rect x="931.3" y="980.3" width="2.4" height="2.52" fill="#3b3b3b" transform="rotate(225 932.5 986.6)"/><rect x="931.3" y="980.3" width="2.4" height="2.52" fill="#3b3b3b" transform="rotate(270 932.5 986.6)"/><rect x="931.3" y="980.3" width="2.4" height="2.52" fill="#3b3b3b" transform="rotate(315 932.5 986.6)"/>
<path d="M124 996 l0 -4.500 l-4.500 4.500 z" fill="#b0b0b0"/>
<g transform="translate(53.75 1003)"><g opacity="0.78"><path d="M5 25 l14 -9 l14 9" fill="none" stroke="#6c6c6c" stroke-width="2.2" stroke-linecap="round"/><circle cx="19" cy="16" r="2.8" fill="#8a6a5a"/><path d="M37 37 l0 -5 l-5 5 z" fill="#9a9a9a"/></g></g>
<g transform="translate(95.5 1003)"><path d="M20 2 l15 0 l-9 9.5 l-6 -4.5 z" fill="#111"/><path d="M19.5 7 l6.5 4.8 l-5.5 7 l-11 3 l3.4 -10 z" fill="#f0a04b" stroke="#1a1205" stroke-width="1"/><path d="M10 21.5 l7.5 -7.5" stroke="#1a1205" stroke-width="1"/><circle cx="17.8" cy="13.6" r="1.2" fill="#1a1205"/><path d="M12 24 l17 2 l-5 9.5 l-17 -3 z" fill="#9a9a9a" stroke="#111" stroke-width="1"/><path d="M37 37 l0 -5 l-5 5 z" fill="#9a9a9a"/></g>
<g transform="translate(135.25 1003)"><g opacity="0.78"><path d="M13 8 l21 5 l-7 16 l-22 -6 z" fill="#5c5c5c" stroke="#666" stroke-width="0.8"/><path d="M20 14.5 l7 1.7 l-2.3 5.4 l-7.2 -1.9 z" fill="#8c6c48"/><path d="M10.3 13.3 l21.6 5.4 M7.7 18.3 l21.8 5.7 M20 9.7 l-6.5 15.6 M27 11.3 l-6.7 15.8" stroke="#6e6e6e" stroke-width="0.8"/></g></g>
<g transform="translate(178.5 1003)"><g opacity="0.78"><path d="M28 3 l3.5 2 l-7 12 q-3 3 -5 2 q-0.5 -2.5 1.5 -5 z" fill="#8c6c48"/><path d="M19.5 19 q-3 1 -4 5 l3 -1 z" fill="#555"/><path d="M3 33 l16 -8 l16 8 z" fill="none" stroke="#8c6c48" stroke-width="0.9"/><path d="M7 31 l24 0" stroke="#8c6c48" stroke-width="0.8"/><path d="M11 29 l16 0" stroke="#8c6c48" stroke-width="0.8"/><path d="M15 27 l8 0" stroke="#8c6c48" stroke-width="0.8"/><path d="M5.2 33 L19 25" stroke="#8c6c48" stroke-width="0.7"/><path d="M9.8 33 L19 25" stroke="#8c6c48" stroke-width="0.7"/><path d="M14.4 33 L19 25" stroke="#8c6c48" stroke-width="0.7"/><path d="M19 33 L19 25" stroke="#8c6c48" stroke-width="0.7"/><path d="M23.6 33 L19 25" stroke="#8c6c48" stroke-width="0.7"/><path d="M28.2 33 L19 25" stroke="#8c6c48" stroke-width="0.7"/><path d="M32.8 33 L19 25" stroke="#8c6c48" stroke-width="0.7"/></g></g>
<g transform="translate(218 1003)"><g opacity="0.78"><path d="M11 19.5 l0 -6 a8 8 0 0 1 16 0 l0 6 l-5 0 l0 -6 a3 3 0 0 0 -6 0 l0 6 z" fill="#8c6c48"/><path d="M11 17.5 l5 0 l0 2.5 l-5 0 z M22 17.5 l5 0 l0 2.5 l-5 0 z" fill="#333"/><path d="M3 33 l16 -8 l16 8 z" fill="none" stroke="#8c6c48" stroke-width="0.9"/><path d="M7 31 l24 0" stroke="#8c6c48" stroke-width="0.8"/><path d="M11 29 l16 0" stroke="#8c6c48" stroke-width="0.8"/><path d="M15 27 l8 0" stroke="#8c6c48" stroke-width="0.8"/><path d="M5.2 33 L19 25" stroke="#8c6c48" stroke-width="0.7"/><path d="M9.8 33 L19 25" stroke="#8c6c48" stroke-width="0.7"/><path d="M14.4 33 L19 25" stroke="#8c6c48" stroke-width="0.7"/><path d="M19 33 L19 25" stroke="#8c6c48" stroke-width="0.7"/><path d="M23.6 33 L19 25" stroke="#8c6c48" stroke-width="0.7"/><path d="M28.2 33 L19 25" stroke="#8c6c48" stroke-width="0.7"/><path d="M32.8 33 L19 25" stroke="#8c6c48" stroke-width="0.7"/></g></g>
<g transform="translate(258.25 1003)"><g opacity="0.78"><path d="M6 20 q2 -8 12 -9 l8 0 q5 2 6 9 z" fill="#8c6c48"/><path d="M14 8 l9 0 q3 0 4 3" fill="none" stroke="#444" stroke-width="1.4"/><circle cx="12" cy="16" r="1" fill="#333"/><path d="M3 33 l16 -8 l16 8 z" fill="none" stroke="#8c6c48" stroke-width="0.9"/><path d="M7 31 l24 0" stroke="#8c6c48" stroke-width="0.8"/><path d="M11 29 l16 0" stroke="#8c6c48" stroke-width="0.8"/><path d="M15 27 l8 0" stroke="#8c6c48" stroke-width="0.8"/><path d="M5.2 33 L19 25" stroke="#8c6c48" stroke-width="0.7"/><path d="M9.8 33 L19 25" stroke="#8c6c48" stroke-width="0.7"/><path d="M14.4 33 L19 25" stroke="#8c6c48" stroke-width="0.7"/><path d="M19 33 L19 25" stroke="#8c6c48" stroke-width="0.7"/><path d="M23.6 33 L19 25" stroke="#8c6c48" stroke-width="0.7"/><path d="M28.2 33 L19 25" stroke="#8c6c48" stroke-width="0.7"/><path d="M32.8 33 L19 25" stroke="#8c6c48" stroke-width="0.7"/></g></g>
<g transform="translate(301 1003)"><g opacity="0.78"><path d="M19 8.1 l12 6.6 l-12 6.6 l-12 -6.6 z" fill="#8c6c48" stroke="#2c2c2c" stroke-width="1" stroke-linejoin="round"/><path d="M7 14.7 l12 6.6 l0 12.6 l-12 -6.6 z" fill="#5e5e5e" stroke="#2c2c2c" stroke-width="1" stroke-linejoin="round"/><path d="M19 21.3 l12 -6.6 l0 12.6 l-12 6.6 z" fill="#505050" stroke="#2c2c2c" stroke-width="1" stroke-linejoin="round"/><path d="M7 12.4 l12 6.6 l12 -6.6" fill="none" stroke="#8c6c48" stroke-width="2"/></g></g>
<g transform="translate(340.5 1003)"><g opacity="0.78"><path d="M19 8.1 l12 6.6 l-12 6.6 l-12 -6.6 z" fill="#8c6c48" stroke="#2c2c2c" stroke-width="1" stroke-linejoin="round"/><path d="M7 14.7 l12 6.6 l0 12.6 l-12 -6.6 z" fill="#5e5e5e" stroke="#2c2c2c" stroke-width="1" stroke-linejoin="round"/><path d="M19 21.3 l12 -6.6 l0 12.6 l-12 6.6 z" fill="#505050" stroke="#2c2c2c" stroke-width="1" stroke-linejoin="round"/><path d="M7 16 l12 6.6 l12 -6.6 l0 -3.6 l-12 6.6 l-12 -6.6z" fill="#8c6c48" stroke="#2c2c2c" stroke-width="0.8"/><path d="M37 37 l0 -5 l-5 5 z" fill="#d0d0d0"/></g></g>
<g transform="translate(381.25 1003)"><g opacity="0.78"><path d="M19 8.1375 l11.5 6.325 l-11.5 6.325 l-11.5 -6.325 z" fill="#5a5a5a" stroke="#353535" stroke-width="1" stroke-linejoin="round"/><path d="M7.5 14.4625 l11.5 6.325 l0 12.075 l-11.5 -6.325 z" fill="#585858" stroke="#353535" stroke-width="1" stroke-linejoin="round"/><path d="M19 20.7875 l11.5 -6.325 l0 12.075 l-11.5 6.325 z" fill="#4e4e4e" stroke="#353535" stroke-width="1" stroke-linejoin="round"/><path d="M19 9.5 l5 2.7 l-5 2.7 l-5 -2.7 z" fill="#8c6c48" stroke="#353535" stroke-width="0.8"/></g></g>
<g transform="translate(421.5 1003)"><g opacity="0.78"><path d="M8 17 l0 -11 l22 0 l0 11 l-5.5 0 a5.5 5.5 0 0 0 -11 0 z" fill="#8c6c48"/><rect x="6" y="22.5" width="8.5" height="9" fill="#606060"/><rect x="15" y="22.5" width="8.5" height="9" fill="#8c6c48"/><rect x="24" y="22.5" width="8.5" height="9" fill="#606060"/></g></g>
<g transform="translate(464.1 1003)"><g opacity="0.78"><path d="M31 4 l3 3.5 l-9 11 l-2 -3.5 z" fill="#2c2c2c"/><path d="M23 15 l2 3.5 l-17 15 l-2.5 -1.5 z" fill="#8c6c48"/></g></g>
<g transform="translate(503.65 1003)"><g opacity="0.78"><path d="M19 4 l13 6 l0 15 l-13 9 l-13 -9 l0 -15 z" fill="#525252" stroke="#686868" stroke-width="1"/><path d="M9 12.5 l20 0 l-10 16 z" fill="none" stroke="#8c6c48" stroke-width="1.4"/><path d="M13.5 15 l11 0 l-5.500 9 z" fill="#3f3f3f" stroke="#8c6c48" stroke-width="1"/></g></g>
<g transform="translate(543.75 1003)"><g opacity="0.78"><path d="M19 7.1 l12 6.6 l-12 6.6 l-12 -6.6 z" fill="#606060" stroke="#6a6a6a" stroke-width="1" stroke-linejoin="round"/><path d="M7 13.7 l12 6.6 l0 12.6 l-12 -6.6 z" fill="#5a5a5a" stroke="#6a6a6a" stroke-width="1" stroke-linejoin="round"/><path d="M19 20.3 l12 -6.6 l0 12.6 l-12 6.6 z" fill="#4c4c4c" stroke="#6a6a6a" stroke-width="1" stroke-linejoin="round"/><path d="M13 10.5 l0 17.5 M16.5 12.5 l0 17.5" stroke="#8c6c48" stroke-width="1.3"/><path d="M13 10.500 l12 -6" stroke="#8c6c48" stroke-width="1.3"/></g></g>
<g transform="translate(586.9 1003)"><g opacity="0.78"><path d="M30 4 l3 3.5 l-8 10 l-2 -3.5 z" fill="#2c2c2c"/><path d="M23 14 l2 3.5 l-17 14.500 l-2.5 -1.5 z" fill="#8c6c48"/><rect x="8" y="27" width="3.5" height="7" fill="#5e5e5e"/><rect x="16" y="24" width="3.5" height="10" fill="#5e5e5e"/><rect x="24" y="19" width="3.5" height="15" fill="#5e5e5e"/><rect x="30.5" y="21" width="3.500" height="13" fill="#5e5e5e"/></g></g>
<g transform="translate(629.75 1003)"><g opacity="0.78"><path d="M6.5 10 l4.6 0 l0 8 l3 0 l-5.3 6.5 l-5.3 -6.5 l3 0 z" fill="#9b9b9b"/><path d="M17 8 l16 -4.500 l2.500 10 l-16 5 z" fill="#5e5e5e" stroke="#6a6a6a" stroke-width="0.8"/><path d="M15 24 l17 -4 l3 9 l-15 5.500 z" fill="#5a5654" stroke="#8c6c48" stroke-width="0.8"/><circle cx="13.5" cy="12.500" r="2" fill="#8c6c48"/><circle cx="34.5" cy="5" r="2" fill="#8c6c48"/></g></g>
<g transform="translate(669.4 1003)"><g opacity="0.78"><path d="M5.5 10 l4.6 0 l0 8 l3 0 l-5.3 6.5 l-5.3 -6.5 l3 0 z" fill="#9b9b9b"/><path d="M18 5 l15 2 l-2 9 l-15 -1 z" fill="#5a5654" stroke="#8c6c48" stroke-width="0.8"/><path d="M15 22 l16 -3.500 l3 9 l-14 5 z" fill="#8c6c48"/><circle cx="19" cy="3.500" r="1.800" fill="#8c6c48"/><circle cx="31" cy="16" r="1.800" fill="#8c6c48"/></g></g>
<g transform="translate(709.25 1003)"><g opacity="0.78"><path d="M8 5 l0 28 M13 5 l0 28 M25 5 l0 28 M30 5 l0 28" stroke="#666" stroke-width="1.4"/><path d="M19 4 l0 30" stroke="#8c6c48" stroke-width="3.2"/><path d="M2 17 l8 0 l0 -3.500 l6 5 l-6 5 l0 -3.500 l-8 0 z M36 17 l-8 0 l0 -3.500 l-6 5 l6 5 l0 -3.500 l8 0 z" fill="#9b9b9b"/></g></g>
<g transform="translate(749.15 1003)"><g opacity="0.78"><circle cx="8" cy="8" r="2.800" fill="#8c6c48"/><circle cx="8" cy="30" r="2.800" fill="#8c6c48"/><circle cx="30" cy="19" r="3" fill="#8c6c48"/><path d="M7 17 l9 0 l0 -3.500 l6.500 5.500 l-6.500 5.500 l0 -3.500 l-9 0 z" fill="#9b9b9b"/></g></g>
<g transform="translate(792.45 1003)"><g opacity="0.78"><rect x="5" y="5" width="28" height="28" fill="none" stroke="#333" stroke-width="2"/><path d="M13 4 l0 30" stroke="#8c6c48" stroke-width="3.400"/><path d="M17 17 l9 0 l0 -3.500 l6.500 5.500 l-6.500 5.500 l0 -3.500 l-9 0 z" fill="#9b9b9b"/></g></g>
<g transform="translate(834.85 1003)"><g opacity="0.78"><path d="M19 3 l0 32" stroke="#333" stroke-width="1.2"/><path d="M4 9 l13 10 l-13 10 z" fill="#5f5f5f" stroke="#6a6a6a" stroke-width="0.8"/><path d="M34 9 l-13 10 l13 10 z" fill="#8c6c48"/></g></g>
<g transform="translate(877.1 1003)"><g opacity="0.78"><path d="M6 10 l0 23 l22 0" fill="none" stroke="#333" stroke-width="2.400"/><path d="M6 6 l3.500 5.500 l-7 0 z M32 33 l-5.500 3.500 l0 -7 z" fill="#333"/><path d="M22.3 12.8 L22.3 6.6 L20.1 6.6 L23.5 3.5 L26.9 6.6 L24.7 6.6 L24.7 12.8 L30.9 12.8 L30.9 10.6 L34.0 14.0 L30.9 17.4 L30.9 15.2 L24.7 15.2 L24.7 21.4 L26.9 21.4 L23.5 24.5 L20.1 21.4 L22.3 21.4 L22.3 15.2 L16.1 15.2 L16.1 17.4 L13.0 14.0 L16.1 10.6 L16.1 12.8Z" fill="none" stroke="#8c6c48" stroke-width="1.1" stroke-linejoin="round"/><path d="M37 37 l0 -5 l-5 5 z" fill="#d0d0d0"/></g></g>
<g transform="translate(919.25 1003)"><g opacity="0.78"><circle cx="8.5" cy="8" r="3" fill="#8c6c48"/><circle cx="8.5" cy="18.5" r="3" fill="#8c6c48"/><circle cx="19" cy="8" r="3" fill="#8c6c48"/><circle cx="19" cy="18.5" r="3" fill="#8c6c48"/><circle cx="29.5" cy="8" r="3" fill="#8c6c48"/><circle cx="29.5" cy="18.5" r="3" fill="#8c6c48"/><text x="19" y="35" text-anchor="middle" font-family="Liberation Sans,sans-serif" font-weight="bold" font-size="12.500" fill="#3c3c3c">XYZ</text></g></g>
<g transform="translate(961.75 1003)"><g opacity="0.78"><path d="M19 8.7125 l10.5 5.775 l-10.5 5.775 l-10.5 -5.775 z" fill="#8c6c48" stroke="#3a3a3a" stroke-width="1" stroke-linejoin="round"/><path d="M8.5 14.4875 l10.5 5.775 l0 11.025 l-10.5 -5.775 z" fill="#7a6450" stroke="#3a3a3a" stroke-width="1" stroke-linejoin="round"/><path d="M19 20.2625 l10.5 -5.775 l0 11.025 l-10.5 5.775 z" fill="#6a5846" stroke="#3a3a3a" stroke-width="1" stroke-linejoin="round"/><path d="M6 9 l13 -6 l13 6 l0 17 l-13 8 l-13 -8 z" fill="none" stroke="#4c4c4c" stroke-width="1"/><circle cx="6" cy="9" r="1.300" fill="#9a9a9a"/><circle cx="19" cy="3" r="1.300" fill="#9a9a9a"/><circle cx="32" cy="9" r="1.300" fill="#9a9a9a"/><circle cx="32" cy="26" r="1.300" fill="#9a9a9a"/><circle cx="19" cy="34" r="1.300" fill="#9a9a9a"/><circle cx="6" cy="26" r="1.300" fill="#9a9a9a"/></g></g>
<g fill="#1c1c1c"><rect x="36" y="1050.600" width="7" height="1.400"/><rect x="50" y="1051" width="3" height="1"/><rect x="133" y="1050.600" width="10" height="1.400"/><rect x="150" y="1051" width="4" height="1"/><rect x="180" y="1051" width="2" height="1"/><rect x="235" y="1051" width="3" height="1"/></g>
<defs><radialGradient id="sph" cx="0.4" cy="0.3" r="0.75"><stop offset="0" stop-color="#f2f2f2"/><stop offset="0.55" stop-color="#a8a8a8"/><stop offset="1" stop-color="#3e3e3e"/></radialGradient></defs>
<path d="M1521 67 h16 M1521 71.6 h16 M1521 76.2 h16" stroke="#e8e8e8" stroke-width="2.1"/>
<g fill="none" stroke="#9a9a9a" stroke-width="1.500"><circle cx="1914.500" cy="69" r="4.600"/><path d="M1917.500 72.500 l5 6.500" stroke-width="2.400"/><path d="M1931 73 l8 -7.500 l8 7.500 M1934.500 72.500 v6 h9 v-6"/><path d="M1953.500 65.500 h15.500 l-6 7 v7 l-3.500 -2 v-5 z"/><rect x="1976" y="64.500" width="13" height="15.500"/><path d="M1982.500 68.500 v7.500 M1978.800 72.200 h7.500" stroke-width="2.200"/></g>
<path d="M1523.700 89.3 V109.65 M1523.700 98.475 H1532.500" stroke="#8a8a8a" stroke-width="1" fill="none"/>
<circle cx="1541.8" cy="98.475" r="5.2" fill="#e8743c" stroke="#2a1206" stroke-width="0.8"/><path d="M1548.2 100.2 L1551.4 98.5 L1548.2 96.8 Z" fill="#e8743c" stroke="#2a1206" stroke-width="0.5"/><path d="M1545.1 104.2 L1548.6 105.3 L1547.5 101.8 Z" fill="#e8743c" stroke="#2a1206" stroke-width="0.5"/><path d="M1540.1 104.9 L1541.8 108.1 L1543.5 104.9 Z" fill="#e8743c" stroke="#2a1206" stroke-width="0.5"/><path d="M1536.1 101.8 L1535.0 105.3 L1538.5 104.2 Z" fill="#e8743c" stroke="#2a1206" stroke-width="0.5"/><path d="M1535.4 96.8 L1532.2 98.5 L1535.4 100.2 Z" fill="#e8743c" stroke="#2a1206" stroke-width="0.5"/><path d="M1538.5 92.7 L1535.0 91.7 L1536.1 95.2 Z" fill="#e8743c" stroke="#2a1206" stroke-width="0.5"/><path d="M1543.5 92.1 L1541.8 88.9 L1540.1 92.1 Z" fill="#e8743c" stroke="#2a1206" stroke-width="0.5"/><path d="M1547.5 95.2 L1548.6 91.7 L1545.1 92.7 Z" fill="#e8743c" stroke="#2a1206" stroke-width="0.5"/>
<rect x="1632.5" y="91.675" width="13.500" height="13.500" rx="2" fill="#8c8c8c"/><path d="M1635 102.675 l8.500 -8.500" stroke="#3c3c3c" stroke-width="1.300"/>
<circle cx="1654.600" cy="92.875" r="2.700" fill="#8a8a8a"/><circle cx="1654.600" cy="103.875" r="2.700" fill="#8a8a8a"/>
<path d="M1660.5 98.975 l3.600 4.200 l7 -8.400" fill="none" stroke="#76e0a4" stroke-width="1.300"/>
<path d="M1523.700 109.15 V132 M1523.700 120.825 H1532.500" stroke="#8a8a8a" stroke-width="1" fill="none"/>
<path d="M1534.5 126.825 a4 4 0 0 1 2.500 -6.500 a5 5 0 0 1 9 -0.500 a3.600 3.600 0 0 1 5.500 3 a3 3 0 0 1 -0.500 5.500 z" fill="#e8743c" stroke="#2a1206" stroke-width="0.8"/><path d="M1531.5 127.325 a3 3 0 0 1 2 -5 a4 4 0 0 1 7 0 a3 3 0 0 1 1 5 z" fill="#e8743c" stroke="#2a1206" stroke-width="0.7"/>
<rect x="1632.5" y="114.025" width="13.500" height="13.500" rx="2" fill="#8c8c8c"/><path d="M1635 125.025 l8.500 -8.500" stroke="#3c3c3c" stroke-width="1.300"/>
<circle cx="1654.600" cy="115.225" r="2.700" fill="#8a8a8a"/><circle cx="1654.600" cy="126.225" r="2.700" fill="#8a8a8a"/>
<path d="M1660.5 121.325 l3.600 4.200 l7 -8.400" fill="none" stroke="#76e0a4" stroke-width="1.300"/>
<path d="M1523.700 131.5 V154.35 M1523.700 143.175 H1532.500" stroke="#8a8a8a" stroke-width="1" fill="none"/>
<g transform="translate(1532.2 133.175) scale(0.52)"><rect x="6" y="20" width="20" height="12.500" rx="2" fill="#0e0e0e" stroke="#0e0e0e" stroke-width="1"/><path d="M26 24.500 l8.500 -4 l0 12 l-8.500 -4 z" fill="#0e0e0e" stroke="#0e0e0e" stroke-width="1"/><circle cx="11" cy="13.500" r="5.400" fill="#f2f2f2" stroke="#0e0e0e" stroke-width="2"/><circle cx="23.500" cy="11.500" r="6.400" fill="#f2f2f2" stroke="#0e0e0e" stroke-width="2"/><circle cx="11" cy="13.500" r="2.200" fill="#7fb4ec"/><circle cx="23.500" cy="11.500" r="2.600" fill="#7fb4ec"/><rect x="9.500" y="25.500" width="5" height="3.600" rx="1" fill="#f2f2f2"/></g>
<rect x="1632.5" y="136.375" width="13.500" height="13.500" rx="2" fill="#8c8c8c"/><path d="M1635 147.375 l8.500 -8.500" stroke="#3c3c3c" stroke-width="1.300"/>
<circle cx="1654.600" cy="137.575" r="2.700" fill="#8a8a8a"/><circle cx="1654.600" cy="148.575" r="2.700" fill="#8a8a8a"/>
<g stroke="#f0f0f0" stroke-width="1.300" fill="none"><path d="M1660.500 140.675 v-3 h3 M1670 140.675 v-3 h-3 M1660.500 145.675 v3 h3 M1670 145.675 v3 h-3"/><path d="M1663.500 143.175 h3.500 M1665.200 141.425 v3.500" stroke-width="1"/></g>
<path d="M1523.700 153.85 V176.7 M1523.700 165.525 H1532.500" stroke="#8a8a8a" stroke-width="1" fill="none"/>
<rect x="1519.200" y="161.025" width="9" height="9" fill="#3b3b3b" stroke="#8a8a8a" stroke-width="1"/><path d="M1521.200 165.525 h5 M1523.700 163.025 v5" stroke="#9a9a9a" stroke-width="1"/>
<g transform="translate(1533.5 155.525)"><path d="M3.500 3 v14.500 h13" fill="none" stroke="#111" stroke-width="3.400"/><path d="M3.500 3 v14.500 h13" fill="none" stroke="#f4f4f4" stroke-width="1.800"/><circle cx="12" cy="7.500" r="5.600" fill="#b8d6fb" stroke="#111" stroke-width="1"/></g>
<rect x="1632.5" y="158.725" width="13.500" height="13.500" rx="2" fill="#8c8c8c"/><path d="M1635 169.725 l8.500 -8.500" stroke="#3c3c3c" stroke-width="1.300"/>
<circle cx="1654.600" cy="159.925" r="2.700" fill="#8a8a8a"/><circle cx="1654.600" cy="170.925" r="2.700" fill="#8a8a8a"/>
<path d="M1523.700 176.2 V199.05 M1523.700 187.875 H1532.500" stroke="#8a8a8a" stroke-width="1" fill="none"/>
<path d="M1541.5 180.635 l7.2 3.96 l-7.2 3.96 l-7.2 -3.96 z" fill="#a8d2fa" stroke="#1c3650" stroke-width="0.8" stroke-linejoin="round"/><path d="M1534.3 184.595 l7.2 3.96 l0 7.56 l-7.2 -3.96 z" fill="#7fb4ec" stroke="#1c3650" stroke-width="0.8" stroke-linejoin="round"/><path d="M1541.5 188.555 l7.2 -3.96 l0 7.56 l-7.2 3.96 z" fill="#5e94d4" stroke="#1c3650" stroke-width="0.8" stroke-linejoin="round"/>
<rect x="1632.5" y="181.075" width="13.500" height="13.500" rx="2" fill="#8c8c8c"/><path d="M1635 192.075 l8.500 -8.500" stroke="#3c3c3c" stroke-width="1.300"/>
<circle cx="1654.600" cy="182.275" r="2.700" fill="#e4574f"/><circle cx="1654.600" cy="193.275" r="2.700" fill="#e4574f"/>
<path d="M1660.5 188.375 l3.600 4.200 l7 -8.400" fill="none" stroke="#76e0a4" stroke-width="1.300"/>
<path d="M1523.700 198.55 V221.4 M1523.700 210.225 H1532.500" stroke="#8a8a8a" stroke-width="1" fill="none"/>
<rect x="1519.200" y="205.725" width="9" height="9" fill="#3b3b3b" stroke="#8a8a8a" stroke-width="1"/><path d="M1521.200 210.225 h5 M1523.700 207.725 v5" stroke="#9a9a9a" stroke-width="1"/>
<g transform="translate(1533.5 200.225)"><path d="M3.500 3 v14.500 h13" fill="none" stroke="#111" stroke-width="3.400"/><path d="M3.500 3 v14.500 h13" fill="none" stroke="#f4f4f4" stroke-width="1.800"/><circle cx="12" cy="7.500" r="5.600" fill="#b8d6fb" stroke="#111" stroke-width="1"/></g>
<rect x="1632.5" y="203.425" width="13.500" height="13.500" rx="2" fill="#8c8c8c"/><path d="M1635 214.425 l8.500 -8.500" stroke="#3c3c3c" stroke-width="1.300"/>
<circle cx="1654.600" cy="204.625" r="2.700" fill="#8a8a8a"/><circle cx="1654.600" cy="215.625" r="2.700" fill="#8a8a8a"/>
<path d="M1523.700 220.9 V232.575 M1523.700 232.575 H1532.500" stroke="#8a8a8a" stroke-width="1" fill="none"/>
<rect x="1519.200" y="228.075" width="9" height="9" fill="#464646" stroke="#8a8a8a" stroke-width="1"/><path d="M1521.200 232.575 h5 M1523.700 230.075 v5" stroke="#9a9a9a" stroke-width="1"/>
<g transform="translate(1533.5 222.575)"><path d="M3.500 3 v14.500 h13" fill="none" stroke="#111" stroke-width="3.400"/><path d="M3.500 3 v14.500 h13" fill="none" stroke="#f4f4f4" stroke-width="1.800"/><circle cx="12" cy="7.500" r="5.600" fill="#b8d6fb" stroke="#111" stroke-width="1"/></g>
<rect x="1632.5" y="225.775" width="13.500" height="13.500" rx="2" fill="#8c8c8c"/><path d="M1635 236.775 l8.500 -8.500" stroke="#3c3c3c" stroke-width="1.300"/>
<circle cx="1654.600" cy="226.975" r="2.700" fill="#e4574f"/><circle cx="1654.600" cy="237.975" r="2.700" fill="#e4574f"/>
<g transform="translate(1673.5 132.175) scale(0.6)"><rect x="6" y="20" width="20" height="12.500" rx="2" fill="#e8743c" stroke="#2a1206" stroke-width="1"/><path d="M26 24.500 l8.500 -4 l0 12 l-8.500 -4 z" fill="#e8743c" stroke="#2a1206" stroke-width="1"/><circle cx="11" cy="13.500" r="5.400" fill="#e8743c" stroke="#2a1206" stroke-width="2"/><circle cx="23.500" cy="11.500" r="6.400" fill="#e8743c" stroke="#2a1206" stroke-width="2"/><circle cx="11" cy="13.500" r="2.200" fill="#3a1a0a"/><circle cx="23.500" cy="11.500" r="2.600" fill="#3a1a0a"/><rect x="9.500" y="25.500" width="5" height="3.600" rx="1" fill="#e8743c"/></g>
<g transform="translate(1674 155.525)"><rect x="0" y="0" width="20" height="20" fill="#5a5a5a"/><rect x="0" y="0" width="4" height="4" fill="#6e6e6e"/><rect x="0" y="8" width="4" height="4" fill="#6e6e6e"/><rect x="0" y="16" width="4" height="4" fill="#6e6e6e"/><rect x="4" y="4" width="4" height="4" fill="#6e6e6e"/><rect x="4" y="12" width="4" height="4" fill="#6e6e6e"/><rect x="8" y="0" width="4" height="4" fill="#6e6e6e"/><rect x="8" y="8" width="4" height="4" fill="#6e6e6e"/><rect x="8" y="16" width="4" height="4" fill="#6e6e6e"/><rect x="12" y="4" width="4" height="4" fill="#6e6e6e"/><rect x="12" y="12" width="4" height="4" fill="#6e6e6e"/><rect x="16" y="0" width="4" height="4" fill="#6e6e6e"/><rect x="16" y="8" width="4" height="4" fill="#6e6e6e"/><rect x="16" y="16" width="4" height="4" fill="#6e6e6e"/><rect x="0" y="15.500" width="20" height="4.500" fill="#8a8a8a"/><circle cx="10" cy="9.500" r="8" fill="url(#sph)"/></g>
<g transform="translate(1696 177.875)"><rect x="0" y="0" width="20" height="20" fill="#5a5a5a"/><rect x="0" y="0" width="4" height="4" fill="#6e6e6e"/><rect x="0" y="8" width="4" height="4" fill="#6e6e6e"/><rect x="0" y="16" width="4" height="4" fill="#6e6e6e"/><rect x="4" y="4" width="4" height="4" fill="#6e6e6e"/><rect x="4" y="12" width="4" height="4" fill="#6e6e6e"/><rect x="8" y="0" width="4" height="4" fill="#6e6e6e"/><rect x="8" y="8" width="4" height="4" fill="#6e6e6e"/><rect x="8" y="16" width="4" height="4" fill="#6e6e6e"/><rect x="12" y="4" width="4" height="4" fill="#6e6e6e"/><rect x="12" y="12" width="4" height="4" fill="#6e6e6e"/><rect x="16" y="0" width="4" height="4" fill="#6e6e6e"/><rect x="16" y="8" width="4" height="4" fill="#6e6e6e"/><rect x="16" y="16" width="4" height="4" fill="#6e6e6e"/><rect x="0" y="15.500" width="20" height="4.500" fill="#8a8a8a"/><circle cx="10" cy="9.500" r="8" fill="url(#sph)"/></g>
<circle cx="1680" cy="180.875" r="3.800" fill="url(#og)"/><circle cx="1687.500" cy="188.875" r="4" fill="url(#og)"/><defs><radialGradient id="og" cx="0.35" cy="0.3" r="0.8"><stop offset="0" stop-color="#f0a070"/><stop offset="1" stop-color="#a8501c"/></radialGradient></defs>
<path d="M1521 536.2 h16 M1521 540.8 h16 M1521 545.4 h16" stroke="#9a9a9a" stroke-width="2.1"/>
<g fill="none" stroke="#9a9a9a" stroke-width="1.600"><path d="M1835 541.500 h-16 M1825 535.500 l-6 6 l6 6"/><path d="M1841 541.500 h15 M1850.500 535.500 l6 6 l-6 6" stroke="#555"/><path d="M1871 549 v-15 M1865 540 l6 -6 l6 6"/><circle cx="1891.500" cy="538.500" r="4.400"/><path d="M1894.500 542 l4.600 6.500" stroke-width="2.400"/><path d="M1907 534.500 h15.500 l-6 7 v7 l-3.500 -2 v-5 z"/><rect x="1932.500" y="540" width="11" height="9" rx="1"/><path d="M1934.800 540 v-3 a3.200 3.200 0 0 1 6.400 0"/><circle cx="1938" cy="544.500" r="1" fill="#9a9a9a"/><circle cx="1960.500" cy="541.500" r="7"/><circle cx="1960.500" cy="541.500" r="2.600"/><rect x="1976.500" y="533.500" width="13" height="16"/><path d="M1983 537.500 v8 M1979 541.500 h8" stroke-width="2.200"/></g>
<circle cx="1528.9" cy="570" r="6.8" fill="#e8743c" stroke="#2a1206" stroke-width="0.8"/><path d="M1536.9 571.7 L1540.1 570.0 L1536.9 568.3 Z" fill="#e8743c" stroke="#2a1206" stroke-width="0.5"/><path d="M1533.4 576.9 L1536.8 577.9 L1535.8 574.5 Z" fill="#e8743c" stroke="#2a1206" stroke-width="0.5"/><path d="M1527.2 578.0 L1528.9 581.2 L1530.6 578.0 Z" fill="#e8743c" stroke="#2a1206" stroke-width="0.5"/><path d="M1522.0 574.5 L1521.0 577.9 L1524.4 576.9 Z" fill="#e8743c" stroke="#2a1206" stroke-width="0.5"/><path d="M1520.9 568.3 L1517.7 570.0 L1520.9 571.7 Z" fill="#e8743c" stroke="#2a1206" stroke-width="0.5"/><path d="M1524.4 563.1 L1521.0 562.1 L1522.0 565.5 Z" fill="#e8743c" stroke="#2a1206" stroke-width="0.5"/><path d="M1530.6 562.0 L1528.9 558.8 L1527.2 562.0 Z" fill="#e8743c" stroke="#2a1206" stroke-width="0.5"/><path d="M1535.8 565.5 L1536.8 562.1 L1533.4 563.1 Z" fill="#e8743c" stroke="#2a1206" stroke-width="0.5"/>
<circle cx="1526.7" cy="643.5" r="8" fill="#6c6c6c"/><circle cx="1526.7" cy="643.5" r="5.600" fill="#1c1c1c"/><circle cx="1526.7" cy="643.5" r="4.600" fill="#8f8f8f"/>
<path d="M1606.7 643.6 l3.200 3.600 l5.400 -7" fill="none" stroke="#1c1c1c" stroke-width="1.900"/>
<circle cx="1526.7" cy="666.2" r="8" fill="#6c6c6c"/><circle cx="1526.7" cy="666.2" r="5.600" fill="#1c1c1c"/><circle cx="1526.7" cy="666.2" r="4.600" fill="#8f8f8f"/>
<path d="M1687.5 664.2 l3.200 -3.400 l3.200 3.400 M1687.5 668.8 l3.200 3.400 l3.200 -3.400" fill="none" stroke="#9a9a9a" stroke-width="1.200"/>
<path d="M1850.5 670.7 v3.500" stroke="#555" stroke-width="1"/>
<circle cx="1526.7" cy="689" r="8" fill="#6c6c6c"/><circle cx="1526.7" cy="689" r="5.600" fill="#1c1c1c"/><circle cx="1526.7" cy="689" r="4.600" fill="#8f8f8f"/>
<path d="M1687.5 687 l3.200 -3.400 l3.200 3.400 M1687.5 691.6 l3.200 3.400 l3.200 -3.400" fill="none" stroke="#9a9a9a" stroke-width="1.200"/>
<path d="M1850.5 693.5 v3.500" stroke="#555" stroke-width="1"/>
<circle cx="1526.7" cy="711.8" r="8" fill="#6c6c6c"/><circle cx="1526.7" cy="711.8" r="5.600" fill="#1c1c1c"/><circle cx="1526.7" cy="711.8" r="4.600" fill="#8f8f8f"/>
<path d="M1687.5 709.8 l3.200 -3.400 l3.200 3.400 M1687.5 714.4 l3.200 3.400 l3.200 -3.400" fill="none" stroke="#9a9a9a" stroke-width="1.200"/>
<path d="M1850.5 716.3 v3.500" stroke="#555" stroke-width="1"/>
<circle cx="1526.7" cy="734.5" r="8" fill="#6c6c6c"/><circle cx="1526.7" cy="734.5" r="5.600" fill="#1c1c1c"/><circle cx="1526.7" cy="734.5" r="4.600" fill="#8f8f8f"/>
<circle cx="1526.7" cy="763.7" r="8" fill="#6c6c6c"/><circle cx="1526.7" cy="763.7" r="5.600" fill="#1c1c1c"/><circle cx="1526.7" cy="763.7" r="4.600" fill="#8f8f8f"/>
<path d="M1661.2 763.8 l3.200 3.600 l5.400 -7" fill="none" stroke="#1c1c1c" stroke-width="1.900"/>
<circle cx="1526.7" cy="785" r="8" fill="#6c6c6c"/><circle cx="1526.7" cy="785" r="5.600" fill="#1c1c1c"/><circle cx="1526.7" cy="785" r="4.600" fill="#8f8f8f"/>
<circle cx="1700.8" cy="785" r="4" fill="#4c4c4c"/>
<path d="M1728.500 780.500 l4 4.200 l-4 4.200" fill="none" stroke="#7a7a7a" stroke-width="1.300"/>
<path d="M1841 792 l2 -5 l8 -8 l3 3 l-8 8 z M1850 778 l3 -3 l4 4 l-3 3 z" fill="#585858"/>
<circle cx="1526.7" cy="807.3" r="8" fill="#6c6c6c"/><circle cx="1526.7" cy="807.3" r="5.600" fill="#1c1c1c"/><circle cx="1526.7" cy="807.3" r="4.600" fill="#8f8f8f"/>
<circle cx="1700.8" cy="807.3" r="8" fill="#6c6c6c"/><circle cx="1700.8" cy="807.3" r="5.600" fill="#1c1c1c"/><circle cx="1700.8" cy="807.3" r="4.600" fill="#8f8f8f"/>
<path d="M1820.5 805.3 l3.200 -3.400 l3.200 3.400 M1820.5 809.9 l3.200 3.400 l3.200 -3.400" fill="none" stroke="#9a9a9a" stroke-width="1.200"/>
<path d="M1916.5 811.8 v3.500" stroke="#555" stroke-width="1"/>
<circle cx="1526.7" cy="838.7" r="8" fill="#6c6c6c"/><circle cx="1526.7" cy="838.7" r="5.600" fill="#1c1c1c"/><circle cx="1526.7" cy="838.7" r="4.600" fill="#8f8f8f"/>
<path d="M1680.5 836.7 l3.200 -3.400 l3.200 3.400 M1680.5 841.3 l3.200 3.400 l3.200 -3.400" fill="none" stroke="#9a9a9a" stroke-width="1.200"/>
<circle cx="1700.8" cy="838.7" r="8" fill="#6c6c6c"/><circle cx="1700.8" cy="838.7" r="5.600" fill="#1c1c1c"/><circle cx="1700.8" cy="838.7" r="4.600" fill="#8f8f8f"/>
<path d="M1840 836.7 l3.200 -3.400 l3.200 3.400 M1840 841.3 l3.200 3.400 l3.200 -3.400" fill="none" stroke="#9a9a9a" stroke-width="1.200"/>
<circle cx="1526.7" cy="862.2" r="8" fill="#6c6c6c"/><circle cx="1526.7" cy="862.2" r="5.600" fill="#1c1c1c"/><circle cx="1526.7" cy="862.2" r="4.600" fill="#8f8f8f"/>
<path d="M1798 860.2 l3.200 -3.400 l3.200 3.400 M1798 864.8 l3.200 3.400 l3.200 -3.400" fill="none" stroke="#9a9a9a" stroke-width="1.200"/>
<path d="M1896.2 860.2 l3.200 -3.400 l3.200 3.400 M1896.2 864.8 l3.200 3.400 l3.200 -3.400" fill="none" stroke="#9a9a9a" stroke-width="1.200"/>
<circle cx="1526.7" cy="892.1" r="8" fill="#6c6c6c"/><circle cx="1526.7" cy="892.1" r="5.600" fill="#1c1c1c"/><circle cx="1526.7" cy="892.1" r="4.600" fill="#8f8f8f"/>
<path d="M1717.2 892.2 l3.200 3.600 l5.400 -7" fill="none" stroke="#1c1c1c" stroke-width="1.900"/>
<circle cx="1526.7" cy="913.5" r="8" fill="#6c6c6c"/><circle cx="1526.7" cy="913.5" r="5.600" fill="#1c1c1c"/><circle cx="1526.7" cy="913.5" r="4.600" fill="#8f8f8f"/>
<path d="M1717.2 913.6 l3.200 3.600 l5.400 -7" fill="none" stroke="#1c1c1c" stroke-width="1.900"/>
<circle cx="1526.7" cy="934.8" r="8" fill="#6c6c6c"/><circle cx="1526.7" cy="934.8" r="5.600" fill="#1c1c1c"/><circle cx="1526.7" cy="934.8" r="4.600" fill="#8f8f8f"/>
<path d="M1717.2 934.9 l3.200 3.600 l5.400 -7" fill="none" stroke="#1c1c1c" stroke-width="1.900"/>
<circle cx="1526.7" cy="955.9" r="8" fill="#6c6c6c"/><circle cx="1526.7" cy="955.9" r="5.600" fill="#1c1c1c"/><circle cx="1526.7" cy="955.9" r="4.600" fill="#8f8f8f"/>
<path d="M1717.2 956 l3.200 3.600 l5.400 -7" fill="none" stroke="#1c1c1c" stroke-width="1.900"/>
<circle cx="1526.7" cy="977" r="8" fill="#6c6c6c"/><circle cx="1526.7" cy="977" r="5.600" fill="#1c1c1c"/><circle cx="1526.7" cy="977" r="4.600" fill="#8f8f8f"/>
<path d="M1717.2 977.1 l3.200 3.600 l5.400 -7" fill="none" stroke="#1c1c1c" stroke-width="1.900"/>
<circle cx="1526.7" cy="1006" r="4" fill="#4c4c4c"/></svg>
<span class="t" style="left:921.5px;top:4.6px;height:21px;line-height:21px;font-size:15px;color:#2b2b2b;font-weight:bold;transform:scaleX(0.9810) translateZ(0);">Subway.c4d * - メイン</span>
<span class="t" style="left:1556.0px;top:9.1px;height:19px;line-height:19px;font-size:13.5px;color:#3a3a3a;transform:scaleX(0.9850) translateZ(0);">ノードスペース</span>
<span class="t" style="left:1779.0px;top:9.1px;height:19px;line-height:19px;font-size:13.5px;color:#3a3a3a;transform:scaleX(0.9630) translateZ(0);">レイアウト</span>
<span class="t" style="left:79.0px;top:84.2px;height:16px;line-height:16px;font-size:11.2px;color:#e8e8e8;font-weight:bold;transform:scaleX(0.9530) translateZ(0);">ビュー</span>
<span class="t" style="left:128.8px;top:84.2px;height:16px;line-height:16px;font-size:11.2px;color:#e8e8e8;font-weight:bold;transform:scaleX(0.9679) translateZ(0);">カメラ</span>
<span class="t" style="left:178.8px;top:84.2px;height:16px;line-height:16px;font-size:11.2px;color:#e8e8e8;font-weight:bold;transform:scaleX(0.9915) translateZ(0);">表示</span>
<span class="t" style="left:217.7px;top:84.2px;height:16px;line-height:16px;font-size:11.2px;color:#e6ee7c;font-weight:bold;transform:scaleX(1.0008) translateZ(0);">オプション</span>
<span class="t" style="left:291.0px;top:84.2px;height:16px;line-height:16px;font-size:11.2px;color:#e6ee7c;font-weight:bold;transform:scaleX(0.9656) translateZ(0);">フィルタ</span>
<span class="t" style="left:351.8px;top:84.2px;height:16px;line-height:16px;font-size:11.2px;color:#e8e8e8;font-weight:bold;transform:scaleX(0.9887) translateZ(0);">パネル</span>
<span class="t" style="left:401.8px;top:82.7px;height:17px;line-height:17px;font-size:12px;color:#e8e8e8;font-weight:bold;transform:scaleX(1.0000) translateZ(0);">Redshift</span>
<span class="t" style="left:51.0px;top:109.8px;height:16px;line-height:16px;font-size:11.5px;color:#d6d6d6;transform:scaleX(0.9652) translateZ(0);">透視</span>
<span class="t" style="left:747.3px;top:110.0px;height:16px;line-height:16px;font-size:11.5px;color:#d6d6d6;transform:scaleX(1.0058) translateZ(0);">カメラ</span>
<span class="t" style="left:1359.5px;top:949.2px;height:16px;line-height:16px;font-size:11.2px;color:#dedede;transform:scaleX(1.0739) translateZ(0);">グリッド間隔 : 500 cm</span>
<span class="t" style="left:1462.3px;top:108.7px;height:15px;line-height:15px;font-size:10.5px;color:#5fd67f;transform:scaleX(1.0000) translateZ(0);">Y</span>
<span class="t" style="left:1484.5px;top:128.9px;height:15px;line-height:15px;font-size:10.5px;color:#5b8fd9;transform:scaleX(1.0000) translateZ(0);">Z</span>
<span class="t" style="left:1486.2px;top:145.1px;height:15px;line-height:15px;font-size:10.5px;color:#c85a5a;transform:scaleX(1.0000) translateZ(0);">X</span>
<span class="t" style="left:61.0px;top:978.5px;height:16px;line-height:16px;font-size:11.2px;color:#f0f0f0;font-weight:bold;transform:scaleX(1.0008) translateZ(0);">ライブ選択</span>
<span class="t" style="left:136.5px;top:978.5px;height:16px;line-height:16px;font-size:11.2px;color:#8c8c8c;transform:scaleX(1.0130) translateZ(0);">ループ選択</span>
<span class="t" style="left:210.5px;top:978.5px;height:16px;line-height:16px;font-size:11.2px;color:#8c8c8c;transform:scaleX(0.9919) translateZ(0);">リング選択</span>
<span class="t" style="left:284.0px;top:978.5px;height:16px;line-height:16px;font-size:11.2px;color:#8c8c8c;transform:scaleX(1.0097) translateZ(0);">シャープエッジ選択</span>
<span class="t" style="left:405.0px;top:978.5px;height:16px;line-height:16px;font-size:11.2px;color:#8c8c8c;transform:scaleX(1.0052) translateZ(0);">全て反転</span>
<span class="t" style="left:469.5px;top:978.5px;height:16px;line-height:16px;font-size:11.2px;color:#8c8c8c;transform:scaleX(1.0326) translateZ(0);">選択範囲を拡大...</span>
<span class="t" style="left:597.0px;top:978.5px;height:16px;line-height:16px;font-size:11.2px;color:#8c8c8c;transform:scaleX(1.0086) translateZ(0);">選択範囲を縮小</span>
<span class="t" style="left:694.0px;top:978.5px;height:16px;line-height:16px;font-size:11.2px;color:#8c8c8c;transform:scaleX(1.0129) translateZ(0);">連続したエレメントを選択</span>
<span class="t" style="left:848.0px;top:978.5px;height:16px;line-height:16px;font-size:11.2px;color:#8c8c8c;transform:scaleX(1.0113) translateZ(0);">ミラー選択...</span>
<span class="t" style="left:953.0px;top:978.5px;height:16px;line-height:16px;font-size:11.2px;color:#8c8c8c;transform:scaleX(1.0099) translateZ(0);">選択エレメントを隠す</span>
<span class="t" style="left:1083.5px;top:978.5px;height:16px;line-height:16px;font-size:11.2px;color:#8c8c8c;transform:scaleX(1.0092) translateZ(0);">選択エレメント以外を隠す</span>
<span class="t" style="left:1237.0px;top:978.5px;height:16px;line-height:16px;font-size:11.2px;color:#8c8c8c;transform:scaleX(0.9829) translateZ(0);">全て表示</span>
<span class="t" style="left:1301.4px;top:978.5px;height:16px;line-height:16px;font-size:11.2px;color:#979a4e;transform:scaleX(1.0099) translateZ(0);">選択範囲を記録</span>
<span class="t" style="left:1400.6px;top:978.5px;height:16px;line-height:16px;font-size:11.2px;color:#8c8c8c;transform:scaleX(1.0099) translateZ(0);">選択範囲を変換</span>
<span class="t" style="left:1520.5px;top:40.0px;height:16px;line-height:16px;font-size:11.2px;color:#dcdcdc;transform:scaleX(0.9905) translateZ(0);">オブジェクト</span>
<span class="t" style="left:1602.0px;top:40.0px;height:16px;line-height:16px;font-size:11.2px;color:#808080;transform:scaleX(0.9897) translateZ(0);">テイク</span>
<span class="t" style="left:1548.0px;top:63.0px;height:16px;line-height:16px;font-size:11.2px;color:#e8e8e8;font-weight:bold;transform:scaleX(1.0052) translateZ(0);">ファイル</span>
<span class="t" style="left:1609.0px;top:63.0px;height:16px;line-height:16px;font-size:11.2px;color:#e8e8e8;font-weight:bold;transform:scaleX(1.0272) translateZ(0);">編集</span>
<span class="t" style="left:1648.0px;top:63.0px;height:16px;line-height:16px;font-size:11.2px;color:#e8e8e8;font-weight:bold;transform:scaleX(1.0272) translateZ(0);">表示</span>
<span class="t" style="left:1687.0px;top:63.0px;height:16px;line-height:16px;font-size:11.2px;color:#e8e8e8;font-weight:bold;transform:scaleX(1.0128) translateZ(0);">オブジェクト</span>
<span class="t" style="left:1771.0px;top:63.0px;height:16px;line-height:16px;font-size:11.2px;color:#e6ee7c;font-weight:bold;transform:scaleX(1.0049) translateZ(0);">タグ</span>
<span class="t" style="left:1810.0px;top:63.0px;height:16px;line-height:16px;font-size:11.2px;color:#e8e8e8;font-weight:bold;transform:scaleX(1.0128) translateZ(0);">ブックマーク</span>
<span class="t" style="left:1555.0px;top:89.7px;height:18px;line-height:18px;font-size:12.5px;color:#f2c257;transform:scaleX(1.0117) translateZ(0);">Corona Sun</span>
<span class="t" style="left:1555.0px;top:112.0px;height:18px;line-height:18px;font-size:12.5px;color:#dcdcdc;transform:scaleX(1.0228) translateZ(0);">Corona Sky</span>
<span class="t" style="left:1555.5px;top:134.6px;height:18px;line-height:18px;font-size:12.5px;color:#dcdcdc;transform:scaleX(0.8663) translateZ(0);">カメラ</span>
<span class="t" style="left:1555.0px;top:156.7px;height:18px;line-height:18px;font-size:12.5px;color:#dcdcdc;transform:scaleX(1.0039) translateZ(0);">RailGroup</span>
<span class="t" style="left:1555.0px;top:179.1px;height:18px;line-height:18px;font-size:12.5px;color:#dcdcdc;transform:scaleX(1.0527) translateZ(0);">Platform</span>
<span class="t" style="left:1555.0px;top:201.4px;height:18px;line-height:18px;font-size:12.5px;color:#dcdcdc;transform:scaleX(1.0197) translateZ(0);">TrainGroup</span>
<span class="t" style="left:1555.0px;top:223.8px;height:18px;line-height:18px;font-size:12.5px;color:#dcdcdc;transform:scaleX(1.0323) translateZ(0);">Backups</span>
<span class="t" style="left:1520.0px;top:509.8px;height:16px;line-height:16px;font-size:11.2px;color:#e4e4e4;font-weight:bold;transform:scaleX(0.9826) translateZ(0);">属性</span>
<span class="t" style="left:1558.0px;top:509.8px;height:16px;line-height:16px;font-size:11.2px;color:#808080;transform:scaleX(0.9680) translateZ(0);">レイヤー</span>
<span class="t" style="left:1616.0px;top:509.8px;height:16px;line-height:16px;font-size:11.2px;color:#808080;transform:scaleX(0.9826) translateZ(0);">構造</span>
<span class="t" style="left:1548.5px;top:532.0px;height:16px;line-height:16px;font-size:11.2px;color:#e8e8e8;font-weight:bold;transform:scaleX(0.9679) translateZ(0);">モード</span>
<span class="t" style="left:1598.0px;top:532.0px;height:16px;line-height:16px;font-size:11.2px;color:#e8e8e8;font-weight:bold;transform:scaleX(0.9826) translateZ(0);">編集</span>
<span class="t" style="left:1637.0px;top:532.0px;height:16px;line-height:16px;font-size:11.2px;color:#e8e8e8;font-weight:bold;transform:scaleX(1.0116) translateZ(0);">ユーザーデータ</span>
<span class="t" style="left:1546.0px;top:561.2px;height:18px;line-height:18px;font-size:12.5px;color:#dcdcdc;transform:scaleX(1.0178) translateZ(0);">Corona Sun [Corona Sun]</span>
<span class="t" style="left:1559.5px;top:588.4px;height:16px;line-height:16px;font-size:11.2px;color:#c4c4c4;font-weight:bold;transform:scaleX(1.0272) translateZ(0);">基本</span>
<span class="t" style="left:1667.5px;top:588.4px;height:16px;line-height:16px;font-size:11.2px;color:#c4c4c4;font-weight:bold;transform:scaleX(1.0272) translateZ(0);">座標</span>
<span class="t" style="left:1753.5px;top:588.4px;height:16px;line-height:16px;font-size:11.2px;color:#e8e8e8;font-weight:bold;transform:scaleX(1.0054) translateZ(0);">オブジェクト</span>
<span class="t" style="left:1845.5px;top:587.1px;height:17px;line-height:17px;font-size:12px;color:#e8e8e8;font-weight:bold;transform:scaleX(1.0150) translateZ(0);">Include / Exclude</span>
<span class="t" style="left:1519.0px;top:614.0px;height:16px;line-height:16px;font-size:11.2px;color:#f0f0f0;font-weight:bold;transform:scaleX(1.0178) translateZ(0);">オブジェクトの属性</span>
<span class="t" style="left:1543.5px;top:634.7px;height:18px;line-height:18px;font-size:12.5px;color:#dcdcdc;transform:scaleX(1.0245) translateZ(0);">Enabled</span>
<span class="t" style="left:1543.5px;top:657.4px;height:18px;line-height:18px;font-size:12.5px;color:#dcdcdc;transform:scaleX(0.9865) translateZ(0);">Size</span>
<span class="t" style="left:1611.0px;top:657.5px;height:18px;line-height:18px;font-size:12.5px;color:#e4e4e4;transform:scaleX(1.0000) translateZ(0);">1</span>
<span class="t" style="left:1543.5px;top:680.2px;height:18px;line-height:18px;font-size:12.5px;color:#dcdcdc;transform:scaleX(1.0953) translateZ(0);">Intensity</span>
<span class="t" style="left:1611.0px;top:680.3px;height:18px;line-height:18px;font-size:12.5px;color:#e4e4e4;transform:scaleX(1.0000) translateZ(0);">1</span>
<span class="t" style="left:1543.5px;top:703.0px;height:18px;line-height:18px;font-size:12.5px;color:#dcdcdc;transform:scaleX(1.0461) translateZ(0);">View size</span>
<span class="t" style="left:1611.0px;top:703.1px;height:18px;line-height:18px;font-size:12.5px;color:#e4e4e4;transform:scaleX(1.0000) translateZ(0);">100 cm</span>
<span class="t" style="left:1543.5px;top:725.7px;height:18px;line-height:18px;font-size:12.5px;color:#dcdcdc;transform:scaleX(1.0531) translateZ(0);">Textured</span>
<span class="t" style="left:1543.5px;top:754.9px;height:18px;line-height:18px;font-size:12.5px;color:#dcdcdc;transform:scaleX(1.0628) translateZ(0);">Use color from sky</span>
<span class="t" style="left:1543.5px;top:776.2px;height:18px;line-height:18px;font-size:12.5px;color:#dcdcdc;transform:scaleX(1.0377) translateZ(0);">Color</span>
<span class="t" style="left:1543.5px;top:798.5px;height:18px;line-height:18px;font-size:12.5px;color:#dcdcdc;transform:scaleX(1.0543) translateZ(0);">Temperature</span>
<span class="t" style="left:1743.0px;top:798.6px;height:18px;line-height:18px;font-size:12.5px;color:#e4e4e4;transform:scaleX(1.0000) translateZ(0);">6500</span>
<span class="t" style="left:1543.5px;top:829.9px;height:18px;line-height:18px;font-size:12.5px;color:#dcdcdc;transform:scaleX(1.0416) translateZ(0);">Rotation</span>
<span class="t" style="left:1604.0px;top:830.0px;height:18px;line-height:18px;font-size:12.5px;color:#e4e4e4;transform:scaleX(1.0000) translateZ(0);">0 °</span>
<span class="t" style="left:1718.0px;top:829.9px;height:18px;line-height:18px;font-size:12.5px;color:#dcdcdc;transform:scaleX(1.0192) translateZ(0);">Angle</span>
<span class="t" style="left:1762.5px;top:830.0px;height:18px;line-height:18px;font-size:12.5px;color:#e4e4e4;transform:scaleX(1.0000) translateZ(0);">45 °</span>
<span class="t" style="left:1543.5px;top:853.4px;height:18px;line-height:18px;font-size:12.5px;color:#dcdcdc;transform:scaleX(1.0744) translateZ(0);">Direction</span>
<span class="t" style="left:1721.0px;top:853.5px;height:18px;line-height:18px;font-size:12.5px;color:#e4e4e4;transform:scaleX(1.0000) translateZ(0);">0</span>
<span class="t" style="left:1819.7px;top:853.5px;height:18px;line-height:18px;font-size:12.5px;color:#e4e4e4;transform:scaleX(1.0000) translateZ(0);">0.707</span>
<span class="t" style="left:1917.5px;top:853.5px;height:18px;line-height:18px;font-size:12.5px;color:#e4e4e4;transform:scaleX(1.0000) translateZ(0);">0.707</span>
<span class="t" style="left:1543.5px;top:883.3px;height:18px;line-height:18px;font-size:12.5px;color:#dcdcdc;transform:scaleX(1.0794) translateZ(0);">Visible directly</span>
<span class="t" style="left:1543.5px;top:904.7px;height:18px;line-height:18px;font-size:12.5px;color:#dcdcdc;transform:scaleX(1.0748) translateZ(0);">Visible in reflections</span>
<span class="t" style="left:1543.5px;top:926.0px;height:18px;line-height:18px;font-size:12.5px;color:#dcdcdc;transform:scaleX(1.0749) translateZ(0);">Visible in refractions</span>
<span class="t" style="left:1543.5px;top:947.1px;height:18px;line-height:18px;font-size:12.5px;color:#dcdcdc;transform:scaleX(1.0471) translateZ(0);">Generate caustics</span>
<span class="t" style="left:1543.5px;top:968.2px;height:18px;line-height:18px;font-size:12.5px;color:#dcdcdc;transform:scaleX(1.0704) translateZ(0);">Visible in editor</span>
<span class="t" style="left:1543.5px;top:997.2px;height:18px;line-height:18px;font-size:12.5px;color:#7c7c7c;transform:scaleX(1.0715) translateZ(0);">Use old (pre-v6) color mode</span>
</body></html>
